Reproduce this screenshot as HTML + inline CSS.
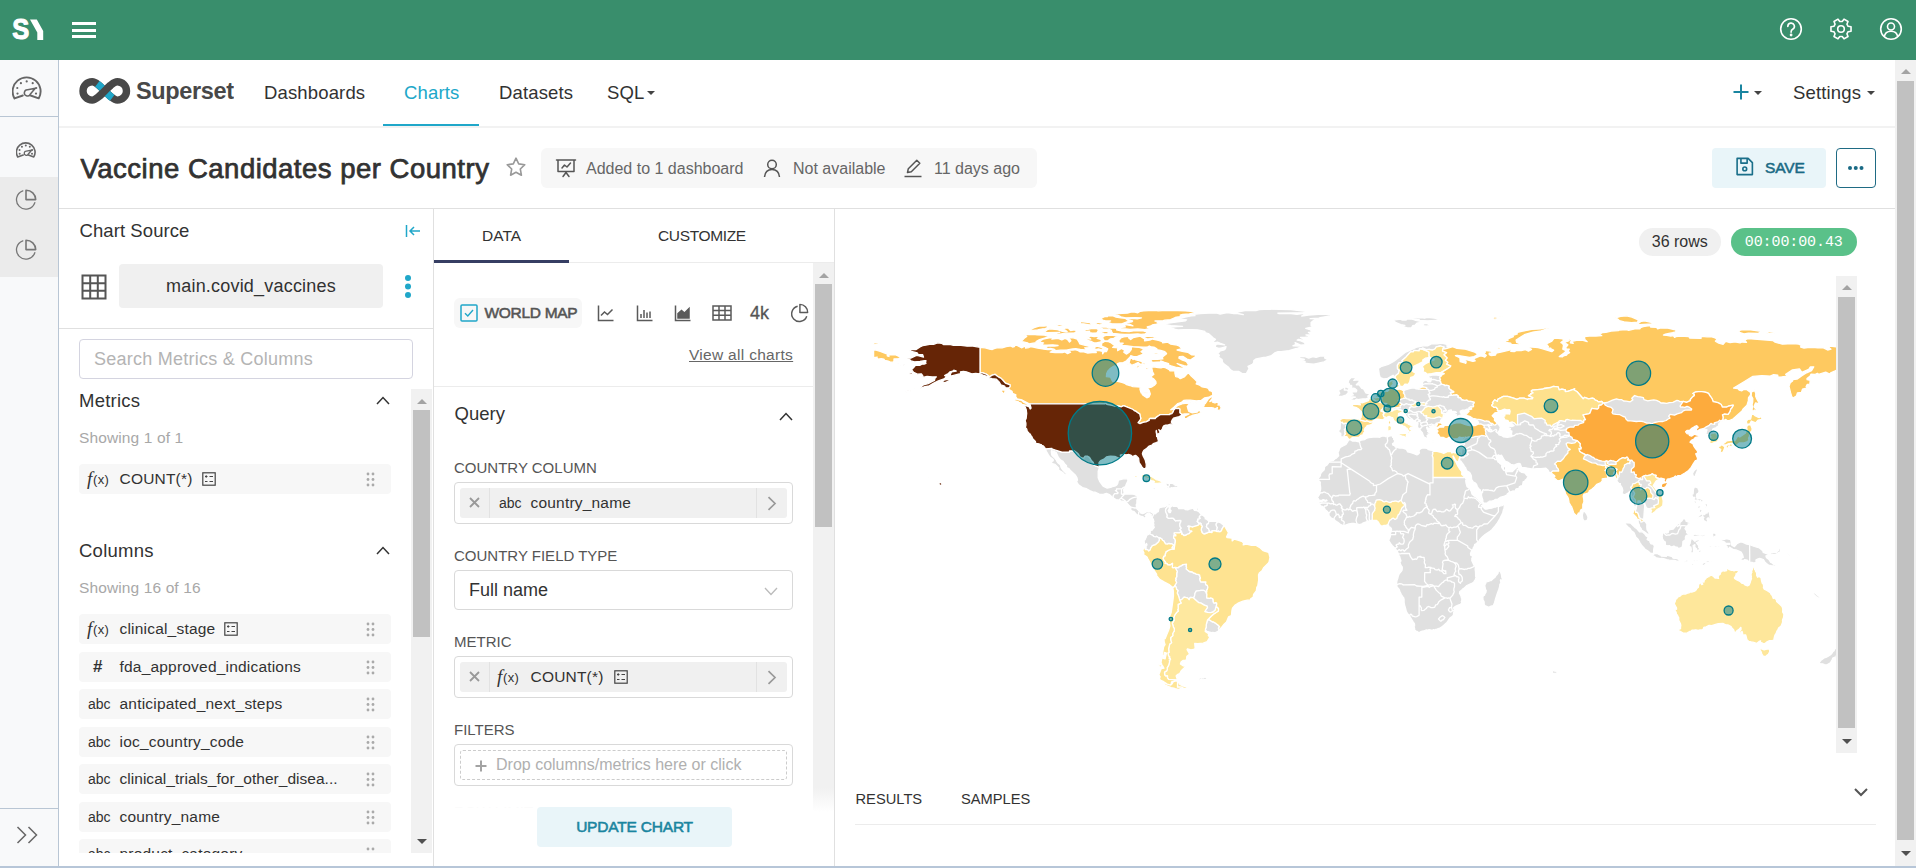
<!DOCTYPE html>
<html lang="en">
<head>
<meta charset="utf-8">
<title>Vaccine Candidates per Country</title>
<style>
*{box-sizing:border-box;margin:0;padding:0}
html,body{width:1916px;height:868px;overflow:hidden;background:#fff}
body{position:relative;font-family:"Liberation Sans",sans-serif;color:#323232;font-size:15px}
.abs{position:absolute}
.t{position:absolute;white-space:nowrap;line-height:1}
#topbar{left:0;top:0;width:1916px;height:60px;background:#398e6c}
#side{left:0;top:60px;width:59px;height:808px;background:#f8f9fa;border-right:1px solid #b9c6d4}
#side .sel{left:0;top:116.500px;width:58px;height:100.500px;background:#ebebeb}
#side .l1{left:0;top:56px;width:58px;height:1px;background:#b9c6d4}
#side .l2{left:0;top:748px;width:58px;height:1px;background:#b9c6d4}
#bottomline{left:0;top:866px;width:1916px;height:2px;background:#b7c6d8}
#navline{left:59px;top:126px;width:1836px;height:2px;background:#f2f2f2}
#titleline{left:59px;top:208px;width:1836px;height:1px;background:#e0e0e0}
.nav{font-size:18.5px;top:84px;color:#323232;letter-spacing:.15px}
#pgscroll{left:1895px;top:60px;width:21px;height:806px;background:#f1f1f1}
.thumb{position:absolute;background:#c1c1c1}
.arr-up{position:absolute;width:0;height:0;border-left:5px solid transparent;border-right:5px solid transparent;border-bottom:5px solid #505050}
.arr-dn{position:absolute;width:0;height:0;border-left:5px solid transparent;border-right:5px solid transparent;border-top:5px solid #505050}
.arr-up.lt{border-bottom-color:#a3a3a3}
#meta{left:541px;top:148px;width:496px;height:40px;background:#f7f7f7;border-radius:6px}
.mt{font-size:16px;color:#666;top:161px}
#save{left:1712px;top:148px;width:114px;height:40px;background:#e9f5f9;border-radius:4px}
#more{left:1836px;top:148px;width:40px;height:40px;border:1.5px solid #1f6b84;border-radius:4px;background:#fff}
.vline{position:absolute;width:1px;background:#e0e0e0}
.hline{position:absolute;height:1px;background:#e0e0e0}
.h18{font-size:18.5px;color:#323232;letter-spacing:.25px}
.item{position:absolute;left:79px;width:312px;height:30px;background:#f7f7f7;border-radius:4px}
.item .nm{position:absolute;left:40.5px;top:7px;font-size:15.5px;letter-spacing:.2px;line-height:1;color:#323232;white-space:nowrap}
.item .ty{position:absolute;left:9px;top:7.5px;font-size:14px;line-height:1;color:#323232;white-space:nowrap}
.item .fx{position:absolute;left:8px;top:4.5px;font-size:13px;line-height:1;color:#323232;white-space:nowrap}
.fx i{font-family:"Liberation Serif",serif;font-style:italic;font-size:19px}
.fx span{font-size:13px;position:relative;top:-1px;margin-left:.8px;letter-spacing:.3px}
.dots{position:absolute;left:287px;top:8px;width:9px;height:15px}
.dim{font-size:15.5px;color:#a8a8a8;letter-spacing:.12px}
.lbl{font-size:15px;color:#555;letter-spacing:0}
.box{position:absolute;left:454px;width:339px;height:41.500px;border:1px solid #d9d9d9;border-radius:4px;background:#fff}
.pill{position:absolute;left:5px;top:5px;width:327px;height:30px;background:#f0f0f0;border-radius:3px}
.pill .x{position:absolute;left:0;top:0;width:30px;height:30px;border-right:1px solid #e2e2e2}
.pill .r{position:absolute;right:0;top:0;width:31px;height:30px;border-left:1px solid #e2e2e2}
.pill .ty{position:absolute;left:39px;top:7.5px;font-size:14px;line-height:1;white-space:nowrap}
.pill .fx{position:absolute;left:37px;top:4.5px;font-size:13px;line-height:1;white-space:nowrap}
.pill .nm{position:absolute;left:70.5px;top:7px;font-size:15.5px;letter-spacing:.2px;line-height:1;white-space:nowrap}
</style>
</head>
<body>
<!-- TOP BAR -->
<div id="topbar" class="abs">
  <svg class="abs" style="left:10px;top:14px" width="40" height="30" viewBox="0 0 40 30"><text x="2.2" y="25.1" font-family="Liberation Sans, sans-serif" font-weight="700" font-size="30" fill="#fff" stroke="#fff" stroke-width="1.1" textLength="17" lengthAdjust="spacingAndGlyphs">S</text><polygon points="20,5.4 26.8,5.4 33.2,16.9 33.2,26 27.3,26 27.3,18.4" fill="#fff"/></svg>
  <div class="abs" style="left:72px;top:22px;width:23.5px;height:3px;background:#fff"></div>
  <div class="abs" style="left:72px;top:28.5px;width:23.5px;height:3px;background:#fff"></div>
  <div class="abs" style="left:72px;top:35px;width:23.5px;height:3px;background:#fff"></div>
  <svg class="abs" style="left:1778px;top:16px" width="26" height="26" viewBox="0 0 26 26" fill="none" stroke="#fff" stroke-width="1.6"><circle cx="13" cy="13" r="10.3"/><path d="M9.8 10.4a3.3 3.3 0 1 1 4.9 2.9c-1 .6-1.6 1.2-1.6 2.4v.6" stroke-linecap="round"/><circle cx="13.1" cy="19" r=".6" fill="#fff"/></svg>
  <svg class="abs" style="left:1828px;top:16.1px" width="26" height="26" viewBox="0 0 26 26" fill="none" stroke="#fff" stroke-width="1.6" stroke-linejoin="round"><circle cx="13" cy="13" r="3.3"/><path d="M20.10 10.28L23.04 10.68L23.04 15.32L20.10 15.72L18.91 17.78L20.02 20.53L16.01 22.85L14.19 20.51L11.81 20.51L9.99 22.85L5.98 20.53L7.09 17.78L5.90 15.72L2.96 15.32L2.96 10.68L5.90 10.28L7.09 8.22L5.98 5.47L9.99 3.15L11.81 5.49L14.19 5.49L16.01 3.15L20.02 5.47L18.91 8.22Z"/></svg>
  <svg class="abs" style="left:1878px;top:16px" width="26" height="26" viewBox="0 0 26 26" fill="none" stroke="#fff" stroke-width="1.6"><circle cx="13" cy="13" r="10.3"/><circle cx="13" cy="10.5" r="3.5"/><path d="M6.2 21c.6-4 3.3-5.8 6.8-5.8s6.2 1.800 6.800 5.800"/></svg>
</div>

<!-- LEFT SIDEBAR -->
<div id="side" class="abs">
  <div class="abs sel"></div>
  <div class="abs l1"></div>
  <div class="abs l2"></div>
  <svg class="abs" style="left:12px;top:16px" width="30" height="24" viewBox="0 0 30 24" fill="none" stroke="#666" stroke-width="1.900" stroke-linecap="round" stroke-linejoin="round"><path d="M2.500 22.400A14 14 0 1 1 26.700 22.400L18.600 19.500M2.500 22.400L10.800 19.500"/><path d="M23.300 12.300L15.700 13.800A3.100 3.100 0 1 0 18.200 18.300Z" stroke-width="1.500"/><g fill="#666" stroke="none"><circle cx="5.500" cy="17.600" r="1.100"/><circle cx="5.300" cy="12" r="1.100"/><circle cx="8.900" cy="7.200" r="1.100"/><circle cx="14.700" cy="5.400" r="1.100"/><circle cx="20.700" cy="7.200" r="1.100"/><circle cx="24.200" cy="12" r="1.100"/><circle cx="24" cy="17.600" r="1.100"/></g></svg>
  <svg class="abs" style="left:16px;top:82px" width="20" height="16" viewBox="0 0 30 24" fill="none" stroke="#666" stroke-width="2.400" stroke-linecap="round" stroke-linejoin="round"><path d="M2.500 22.400A14 14 0 1 1 26.700 22.400L18.600 19.500M2.500 22.400L10.800 19.500"/><path d="M23.300 12.300L15.700 13.800A3.100 3.100 0 1 0 18.200 18.300Z" stroke-width="2"/><g fill="#666" stroke="none"><circle cx="5.500" cy="17.600" r="1.500"/><circle cx="5.300" cy="12" r="1.500"/><circle cx="8.900" cy="7.200" r="1.500"/><circle cx="14.700" cy="5.400" r="1.500"/><circle cx="20.700" cy="7.200" r="1.500"/><circle cx="24.200" cy="12" r="1.500"/><circle cx="24" cy="17.600" r="1.500"/></g></svg>
  <svg class="abs" style="left:15px;top:129.300px" width="22" height="22" viewBox="0 0 22 22" fill="none" stroke="#777" stroke-linejoin="round" stroke-linecap="round"><path d="M7.800 1.800A9.400 9.400 0 1 0 19.800 13.700" stroke-width="1.300"/><path d="M11 1.200V10.600H20.700A9.600 9.600 0 0 0 11 1.200Z" stroke-width="1.600"/></svg>
  <svg class="abs" style="left:15px;top:179.300px" width="22" height="22" viewBox="0 0 22 22" fill="none" stroke="#777" stroke-linejoin="round" stroke-linecap="round"><path d="M7.800 1.800A9.400 9.400 0 1 0 19.800 13.700" stroke-width="1.300"/><path d="M11 1.200V10.600H20.700A9.600 9.600 0 0 0 11 1.200Z" stroke-width="1.600"/></svg>
  <svg class="abs" style="left:16px;top:765px" width="22" height="20" viewBox="0 0 22 20" fill="none" stroke="#666" stroke-width="1.500"><path d="M1.500 2L9.500 10L1.500 18M12.500 2L20.500 10L12.500 18"/></svg>
</div>
<div id="bottomline" class="abs"></div>

<!-- NAV -->
<svg class="abs" style="left:79px;top:77.9px" width="51.5" height="25.8" viewBox="0 0 51.5 25.8" fill="none" stroke-width="7.4"><path d="M13.2 3.7C20.5 3.7 31 22.1 38.3 22.1A9.2 9.2 0 0 0 47.5 12.9A9.2 9.2 0 0 0 38.3 3.7C31 3.7 20.5 22.1 13.2 22.1A9.2 9.2 0 0 1 4 12.9A9.2 9.2 0 0 1 13.2 3.7Z" stroke="#484848"/><path d="M13.2 3.7C20.5 3.7 31 22.1 38.3 22.1" stroke="#20a7c9" pathLength="100" stroke-dasharray="64 100" stroke-dashoffset="-18"/><path d="M13.2 22.1C20.5 22.1 31 3.7 38.3 3.7" stroke="#484848" pathLength="100" stroke-dasharray="50 100" stroke-dashoffset="-25"/></svg>
<div class="t" style="left:136px;top:79px;font-size:24.5px;font-weight:700;color:#484848;letter-spacing:-.4px;transform-origin:0 0;transform:scaleX(.96)">Superset</div>
<div class="t nav" style="left:264px">Dashboards</div>
<div class="t nav" style="left:404px;color:#20a7c9">Charts</div>
<div class="abs" style="left:383px;top:124px;width:96px;height:3px;background:#20a7c9"></div>
<div class="t nav" style="left:499px">Datasets</div>
<div class="t nav" style="left:607px">SQL</div>
<div class="arr-dn" style="left:647px;top:91px;border-width:4.5px 4px 0 4px;border-top-color:#444"></div>
<svg class="abs" style="left:1732px;top:83px" width="18" height="18" viewBox="0 0 18 18" stroke="#1a85a0" stroke-width="2" fill="none"><path d="M9 1.500v15M1.500 9h15"/></svg>
<div class="arr-dn" style="left:1754px;top:91px;border-width:4.5px 4px 0 4px;border-top-color:#444"></div>
<div class="t nav" style="left:1793px">Settings</div>
<div class="arr-dn" style="left:1867px;top:91px;border-width:4.5px 4px 0 4px;border-top-color:#444"></div>
<div id="navline" class="abs"></div>

<!-- TITLE ROW -->
<div class="t" style="left:80.5px;top:154.6px;font-size:27.5px;font-weight:400;-webkit-text-stroke:.75px #323232;color:#323232;letter-spacing:.5px">Vaccine Candidates per Country</div>
<svg class="abs" style="left:505px;top:156px" width="22" height="22" viewBox="0 0 22 22" fill="none" stroke="#999" stroke-width="1.600" stroke-linejoin="round"><path d="M11 2.200l2.700 5.700 6.100.8-4.500 4.300 1.100 6.200L11 16.200 5.600 19.200l1.100-6.200L2.200 8.700l6.100-.8z"/></svg>
<div id="meta" class="abs"></div>
<svg class="abs" style="left:555px;top:158px" width="22" height="21" viewBox="0 0 22 21" fill="none" stroke="#555" stroke-width="1.500" stroke-linejoin="round" stroke-linecap="round"><path d="M1.500 2h19M3 2v11.500h16V2M8 18.500l3-4 3 4M7 10l2.500-3 2.500 2 3.500-4"/></svg>
<div class="t mt" style="left:586px">Added to 1 dashboard</div>
<svg class="abs" style="left:762px;top:158px" width="20" height="20" viewBox="0 0 20 20" fill="none" stroke="#555" stroke-width="1.500"><circle cx="10" cy="6.500" r="4.300"/><path d="M2.500 19c.5-5 3.500-7.500 7.500-7.500s7 2.500 7.500 7.500"/></svg>
<div class="t mt" style="left:793px">Not available</div>
<svg class="abs" style="left:903px;top:158px" width="20" height="20" viewBox="0 0 20 20" fill="none" stroke="#555" stroke-width="1.500" stroke-linejoin="round"><path d="M1.500 18.500h17" /><path d="M4.500 14.500l.8-3.800L13.800 2.200l3 3L8.300 13.700Z"/></svg>
<div class="t mt" style="left:934px">11 days ago</div>
<div id="save" class="abs"></div>
<svg class="abs" style="left:1734.5px;top:156.3px" width="19.5" height="21" viewBox="0 0 20 22" fill="none" stroke="#1a6f8a" stroke-width="1.700" stroke-linejoin="round"><path d="M2 2.500h11.500L18 7v12.500H2Z"/><path d="M6 2.500v5h6.500v-5"/><circle cx="10" cy="13.500" r="2"/></svg>
<div class="t" style="left:1765px;top:160px;font-size:15.5px;font-weight:400;-webkit-text-stroke:.55px #1a6a85;letter-spacing:-.15px;color:#1a6a85">SAVE</div>
<div id="more" class="abs"><div class="abs" style="left:11px;top:17px;width:3.5px;height:3.5px;border-radius:2px;background:#1a6a85;box-shadow:5.75px 0 0 #1a6a85,11.5px 0 0 #1a6a85"></div></div>
<div id="titleline" class="abs"></div>

<!-- PAGE SCROLLBAR -->
<div id="pgscroll" class="abs">
  <div class="arr-up lt" style="left:5.500px;top:9px"></div>
  <div class="thumb" style="left:2px;top:21px;width:17px;height:759px"></div>
  <div class="arr-dn" style="left:5.500px;top:791px"></div>
</div>

<!-- SECTIONS INSERTED BELOW -->
<!-- LEFT PANEL -->
<div class="vline" style="left:433px;top:209px;height:657px"></div>
<div class="t h18" style="left:79.5px;top:222px;letter-spacing:.08px">Chart Source</div>
<svg class="abs" style="left:405px;top:223.5px" width="16" height="14" viewBox="0 0 16 14" fill="none" stroke="#20a7c9" stroke-width="1.500"><path d="M1.500 1v12M15 7H5M9 3L5 7l4 4"/></svg>
<svg class="abs" style="left:81px;top:274px" width="26" height="26" viewBox="0 0 26 26" fill="none" stroke="#555" stroke-width="2"><rect x="1.500" y="1.500" width="23" height="23"/><path d="M1.500 9.200h23M1.500 16.800h23M9.200 1.500v23M16.800 1.500v23"/></svg>
<div class="abs" style="left:119px;top:264px;width:264px;height:44px;background:#f0f0f0;border-radius:4px"></div>
<div class="t" style="left:119px;width:264px;text-align:center;top:277px;font-size:18px;letter-spacing:.2px;color:#323232">main.covid_vaccines</div>
<div class="abs" style="left:405.2px;top:275px;width:5.5px;height:5.5px;border-radius:3px;background:#20a7c9;box-shadow:0 8.5px 0 #20a7c9,0 17px 0 #20a7c9"></div>
<div class="hline" style="left:59px;top:328px;width:374px"></div>
<div class="abs" style="left:79px;top:339px;width:334px;height:40px;border:1px solid #d4d4e0;border-radius:4px"></div>
<div class="t" style="left:94px;top:350px;font-size:18px;letter-spacing:.25px;color:#b4b4b4">Search Metrics &amp; Columns</div>
<div class="t h18" style="left:79px;top:392px">Metrics</div>
<svg class="abs" style="left:376px;top:396px" width="14" height="9" viewBox="0 0 14 9" fill="none" stroke="#323232" stroke-width="1.500"><path d="M1 8l6-6.500L13 8"/></svg>
<div class="t dim" style="left:79px;top:430px">Showing 1 of 1</div>
<div class="item" style="top:464px"><div class="fx"><i>f</i><span>(x)</span></div><div class="nm">COUNT(*)</div><svg class="abs" style="left:123px;top:8px" width="14" height="14" viewBox="0 0 14 14" fill="none" stroke="#444" stroke-width="1.200"><rect x=".8" y=".8" width="12.400" height="12.400"/><path d="M3 4.500h2.500M7.500 4.500h3.500M3 9.500h2.500M7.500 9.500h3.500M4.200 3.200v2.600" stroke-width="1"/></svg><svg class="dots" viewBox="0 0 9 15" fill="#aaa"><circle cx="2" cy="2" r="1.400"/><circle cx="7" cy="2" r="1.400"/><circle cx="2" cy="7.500" r="1.400"/><circle cx="7" cy="7.500" r="1.400"/><circle cx="2" cy="13" r="1.400"/><circle cx="7" cy="13" r="1.400"/></svg></div>
<div class="t h18" style="left:79px;top:542px">Columns</div>
<svg class="abs" style="left:376px;top:546px" width="14" height="9" viewBox="0 0 14 9" fill="none" stroke="#323232" stroke-width="1.500"><path d="M1 8l6-6.500L13 8"/></svg>
<div class="t dim" style="left:79px;top:580px">Showing 16 of 16</div>
<div class="abs" style="left:59px;top:600px;width:354px;height:253px;overflow:hidden">
<div class="item" style="left:20px;top:14px"><div class="fx"><i>f</i><span>(x)</span></div><div class="nm">clinical_stage</div><svg class="abs" style="left:145px;top:8px" width="14" height="14" viewBox="0 0 14 14" fill="none" stroke="#444" stroke-width="1.200"><rect x=".8" y=".8" width="12.400" height="12.400"/><path d="M3 4.500h2.500M7.500 4.500h3.500M3 9.500h2.500M7.500 9.500h3.500M4.200 3.200v2.600" stroke-width="1"/></svg><svg class="dots" viewBox="0 0 9 15" fill="#aaa"><circle cx="2" cy="2" r="1.400"/><circle cx="7" cy="2" r="1.400"/><circle cx="2" cy="7.500" r="1.400"/><circle cx="7" cy="7.500" r="1.400"/><circle cx="2" cy="13" r="1.400"/><circle cx="7" cy="13" r="1.400"/></svg></div>
<div class="item" style="left:20px;top:52px"><div class="ty" style="left:14px;top:6px;font-weight:700;font-size:17px">#</div><div class="nm">fda_approved_indications</div><svg class="dots" viewBox="0 0 9 15" fill="#aaa"><circle cx="2" cy="2" r="1.400"/><circle cx="7" cy="2" r="1.400"/><circle cx="2" cy="7.500" r="1.400"/><circle cx="7" cy="7.500" r="1.400"/><circle cx="2" cy="13" r="1.400"/><circle cx="7" cy="13" r="1.400"/></svg></div>
<div class="item" style="left:20px;top:89px"><div class="ty">abc</div><div class="nm">anticipated_next_steps</div><svg class="dots" viewBox="0 0 9 15" fill="#aaa"><circle cx="2" cy="2" r="1.400"/><circle cx="7" cy="2" r="1.400"/><circle cx="2" cy="7.500" r="1.400"/><circle cx="7" cy="7.500" r="1.400"/><circle cx="2" cy="13" r="1.400"/><circle cx="7" cy="13" r="1.400"/></svg></div>
<div class="item" style="left:20px;top:127px"><div class="ty">abc</div><div class="nm">ioc_country_code</div><svg class="dots" viewBox="0 0 9 15" fill="#aaa"><circle cx="2" cy="2" r="1.400"/><circle cx="7" cy="2" r="1.400"/><circle cx="2" cy="7.500" r="1.400"/><circle cx="7" cy="7.500" r="1.400"/><circle cx="2" cy="13" r="1.400"/><circle cx="7" cy="13" r="1.400"/></svg></div>
<div class="item" style="left:20px;top:164px"><div class="ty">abc</div><div class="nm" style="letter-spacing:.03px">clinical_trials_for_other_disea...</div><svg class="dots" viewBox="0 0 9 15" fill="#aaa"><circle cx="2" cy="2" r="1.400"/><circle cx="7" cy="2" r="1.400"/><circle cx="2" cy="7.500" r="1.400"/><circle cx="7" cy="7.500" r="1.400"/><circle cx="2" cy="13" r="1.400"/><circle cx="7" cy="13" r="1.400"/></svg></div>
<div class="item" style="left:20px;top:202px"><div class="ty">abc</div><div class="nm">country_name</div><svg class="dots" viewBox="0 0 9 15" fill="#aaa"><circle cx="2" cy="2" r="1.400"/><circle cx="7" cy="2" r="1.400"/><circle cx="2" cy="7.500" r="1.400"/><circle cx="7" cy="7.500" r="1.400"/><circle cx="2" cy="13" r="1.400"/><circle cx="7" cy="13" r="1.400"/></svg></div>
<div class="item" style="left:20px;top:239px"><div class="ty">abc</div><div class="nm">product_category</div><svg class="dots" viewBox="0 0 9 15" fill="#aaa"><circle cx="2" cy="2" r="1.400"/><circle cx="7" cy="2" r="1.400"/><circle cx="2" cy="7.500" r="1.400"/><circle cx="7" cy="7.500" r="1.400"/><circle cx="2" cy="13" r="1.400"/><circle cx="7" cy="13" r="1.400"/></svg></div>
</div>
<div class="abs" style="left:411px;top:389px;width:21px;height:463.5px;background:#f1f1f1">
  <div class="arr-up lt" style="left:5.5px;top:9.5px"></div>
  <div class="thumb" style="left:2px;top:21.2px;width:17px;height:226.6px"></div>
  <div class="arr-dn" style="left:5.5px;top:450px"></div>
</div>
<!--LEFTPANEL-END-->
<!-- MID PANEL -->
<div class="vline" style="left:834px;top:209px;height:657px"></div>
<div class="hline" style="left:434px;top:262px;width:400px;background:#ececec"></div>
<div class="t" style="left:482px;top:228px;font-size:15.500px;color:#323232">DATA</div>
<div class="t" style="left:658px;top:228px;font-size:15.500px;letter-spacing:-.35px;color:#323232">CUSTOMIZE</div>
<div class="abs" style="left:434px;top:260px;width:135px;height:3px;background:#363e63"></div>
<div class="abs" style="left:434px;top:263px;width:381px;height:545px;overflow:hidden">
 <div class="t" style="left:20px;top:541px;font-size:15px;color:#555">ROW LIMIT</div>
 <div class="abs" style="left:0;top:525px;width:381px;height:20px;background:linear-gradient(rgba(255,255,255,0),#fff)"></div>
</div>
<div class="abs" style="left:454px;top:298px;width:128px;height:29.600px;background:#f7f7f7;border-radius:6px"></div>
<svg class="abs" style="left:460px;top:304px" width="18" height="18" viewBox="0 0 18 18" fill="none" stroke="#20a7c9" stroke-width="1.500"><rect x="1" y="1" width="16" height="16" rx="1"/><path d="M5 9.200l2.800 2.800L13 6" stroke-width="1.400"/></svg>
<div class="t" style="left:484.5px;top:305px;font-size:15.5px;font-weight:400;-webkit-text-stroke:.55px #555;color:#555;letter-spacing:-.3px">WORLD MAP</div>
<svg class="abs" style="left:597px;top:304px" width="18" height="18" viewBox="0 0 18 18" fill="none" stroke="#5a5a5a" stroke-width="1.500"><path d="M1.500 1.500v15h15M4 11.500l3.500-3.500 3 2.500 5-5"/></svg>
<svg class="abs" style="left:636px;top:304px" width="18" height="18" viewBox="0 0 18 18" fill="none" stroke="#5a5a5a" stroke-width="1.500"><path d="M1.500 1.500v15h15M5 14v-4M8 14V6M11 14v-5.500M14 14V7.500"/></svg>
<svg class="abs" style="left:674px;top:304px" width="18" height="18" viewBox="0 0 18 18" fill="none" stroke="#5a5a5a" stroke-width="1.500"><path d="M1.500 1.500v15h15"/><path d="M4 14V9.500l3.500-3 3 2.500 4.500-4.500V14Z" fill="#5a5a5a"/></svg>
<svg class="abs" style="left:712px;top:304px" width="20" height="18" viewBox="0 0 20 18" fill="none" stroke="#5a5a5a" stroke-width="1.500"><rect x="1" y="2" width="18" height="14"/><path d="M1 6.500h18M1 11.200h18M7 2v14M13 2v14"/></svg>
<div class="t" style="left:750px;top:304px;font-size:18px;color:#555;-webkit-text-stroke:.3px #555">4k</div>
<svg class="abs" style="left:789px;top:303px" width="20" height="20" viewBox="0 0 22 22" fill="none" stroke="#5a5a5a" stroke-width="1.600" stroke-linejoin="round"><path d="M9.500 3.500A8.500 8.500 0 1 0 19.500 14.500"/><path d="M12 1.500V10.500H20.500A8.800 8.800 0 0 0 12 1.500Z"/></svg>
<div class="t" style="left:689px;top:347px;font-size:15.500px;letter-spacing:.3px;color:#666;text-decoration:underline">View all charts</div>
<div class="hline" style="left:434px;top:386px;width:381px;background:#ececec"></div>
<div class="t h18" style="left:454.5px;top:404.5px;letter-spacing:0">Query</div>
<svg class="abs" style="left:778.5px;top:412px" width="14" height="9" viewBox="0 0 14 9" fill="none" stroke="#323232" stroke-width="1.500"><path d="M1 8l6-6.500L13 8"/></svg>
<div class="t lbl" style="left:454px;top:460px">COUNTRY COLUMN</div>
<div class="box" style="top:482px"><div class="pill"><div class="x"><svg class="abs" style="left:9px;top:9px" width="11" height="11" viewBox="0 0 11 11" stroke="#999" stroke-width="1.800"><path d="M1 1l9 9M10 1l-9 9"/></svg></div><div class="ty">abc</div><div class="nm">country_name</div><div class="r"><svg class="abs" style="left:10px;top:7.5px" width="10" height="15" viewBox="0 0 10 15" fill="none" stroke="#999" stroke-width="1.700"><path d="M1.500 1.200l6.500 6.300-6.500 6.300"/></svg></div></div></div>
<div class="t lbl" style="left:454px;top:548px">COUNTRY FIELD TYPE</div>
<div class="box" style="top:570px;height:40px"></div>
<div class="t" style="left:469px;top:581px;font-size:18px;color:#323232">Full name</div>
<svg class="abs" style="left:764px;top:587px" width="14" height="9" viewBox="0 0 14 9" fill="none" stroke="#bbb" stroke-width="1.300"><path d="M1 1l6 6.500L13 1"/></svg>
<div class="t lbl" style="left:454px;top:634px">METRIC</div>
<div class="box" style="top:656px"><div class="pill"><div class="x"><svg class="abs" style="left:9px;top:9px" width="11" height="11" viewBox="0 0 11 11" stroke="#999" stroke-width="1.800"><path d="M1 1l9 9M10 1l-9 9"/></svg></div><div class="fx"><i>f</i><span>(x)</span></div><div class="nm">COUNT(*)</div><svg class="abs" style="left:154px;top:8px" width="14" height="14" viewBox="0 0 14 14" fill="none" stroke="#444" stroke-width="1.200"><rect x=".8" y=".8" width="12.400" height="12.400"/><path d="M3 4.500h2.500M7.500 4.500h3.500M3 9.500h2.500M7.500 9.500h3.500M4.200 3.200v2.600" stroke-width="1"/></svg><div class="r"><svg class="abs" style="left:10px;top:7.5px" width="10" height="15" viewBox="0 0 10 15" fill="none" stroke="#999" stroke-width="1.700"><path d="M1.500 1.200l6.500 6.300-6.500 6.300"/></svg></div></div></div>
<div class="t lbl" style="left:454px;top:722px">FILTERS</div>
<div class="box" style="top:744px;height:42px"><div class="abs" style="left:5px;top:5px;width:327px;height:30px;border:1px dashed #ccc;border-radius:3px"></div><svg class="abs" style="left:19.5px;top:14.5px" width="12" height="12" viewBox="0 0 12 12" stroke="#a3a3a3" stroke-width="2"><path d="M6 .5v11M.5 6h11"/></svg><div class="t" style="left:41px;top:12px;font-size:16px;color:#b0b0b0">Drop columns/metrics here or click</div></div>
<div class="abs" style="left:537px;top:807px;width:195px;height:40px;background:#e9f5f9;border-radius:4px"></div>
<div class="t" style="left:537px;width:195px;text-align:center;top:818.5px;font-size:15.5px;font-weight:400;-webkit-text-stroke:.55px #1a85a0;letter-spacing:-.2px;color:#1a85a0">UPDATE CHART</div>
<div class="abs" style="left:813px;top:263px;width:21px;height:549px;background:linear-gradient(#f1f1f1 0,#f1f1f1 525px,#fff 549px)">
  <div class="arr-up lt" style="left:5.5px;top:9.5px"></div>
  <div class="thumb" style="left:2.2px;top:21.2px;width:16.6px;height:243.3px"></div>
</div>
<!--MIDPANEL-END-->
<!-- CHART PANEL -->
<div class="abs" style="left:1638.5px;top:228px;width:82.5px;height:27.5px;background:#f0f0f0;border-radius:14px"></div>
<div class="t" style="left:1638.5px;width:82.5px;text-align:center;top:233.5px;font-size:16px;color:#323232">36 rows</div>
<div class="abs" style="left:1731px;top:228px;width:125.5px;height:27.5px;background:#5ac189;border-radius:14px"></div>
<div class="t" style="left:1731px;width:125.5px;text-align:center;top:234.5px;font-size:15px;color:#fff;font-family:'Liberation Mono',monospace;letter-spacing:-.1px">00:00:00.43</div>
<!--MAPSTART--><svg class="abs" style="left:855px;top:279px" width="981" height="473" viewBox="855 279 981 473">
<g stroke="#fff" stroke-width="1.3" stroke-linejoin="round">
<path fill="#e0e0e0" d="M1237.2,312L1246.4,310.4L1255.9,310.5L1259.4,309.5L1269.1,309.2L1290.9,309.6L1307.9,311.7L1302.9,312.8L1292.4,312.9L1277.8,313.2L1279.1,313.7L1288.8,313.4L1297,314.3L1302.3,313.5L1304.6,314.5L1301.6,316L1308.5,315L1321.8,314L1330,314.5L1331.5,315.7L1320.4,317.6L1318.8,318.2L1310.1,318.7L1316.4,318.8L1313.2,320.8L1311.1,322.6L1311.1,325.6L1314.4,327.4L1310.1,327.5L1305.7,328.4L1310.7,329.8L1311.3,332.1L1308.4,332.4L1312,334.7L1305.9,335L1309.1,336L1308.2,337L1304.3,337.4L1300.5,337.4L1303.9,339.3L1304,340.5L1298.6,339.4L1297.2,340.1L1300.9,340.8L1304.4,342.5L1305.5,344.7L1300.6,345.2L1298.5,344.1L1295.1,342.6L1296,344.4L1292.9,345.8L1300.1,346L1303.8,346.1L1296.5,348.5L1289.1,350.6L1281.1,351.6L1278.1,351.6L1275.3,352.6L1271.5,355.5L1265.6,357.4L1263.7,357.5L1260.1,358.2L1256.2,358.9L1253.8,360.6L1253.8,362.5L1252.4,364.3L1248,366.4L1249.1,368.6L1247.8,370.8L1246.4,373.5L1242.6,373.7L1238.6,371.4L1233.1,371.4L1230.5,369.9L1228.6,367.3L1223.9,363.9L1222.5,362.1L1222.1,359.6L1218.4,357.1L1219.4,355.1L1217.5,354.1L1220.2,350.9L1224.3,349.9L1225.4,348.8L1226,346.7L1222.9,347.6L1221.4,348L1218.9,348.4L1215.6,347.5L1215.4,345.7L1216.5,344.2L1219,344.2L1224.6,344.9L1219.9,343.2L1217.5,342.2L1214.7,342.6L1212.5,342L1215.5,339.4L1213.8,338.4L1211.7,336.5L1208.4,333.6L1204.9,332.6L1204.9,331.4L1197.6,329.8L1191.8,329.6L1184.5,329.7L1177.9,329.9L1174.7,329.1L1170,327.3L1177.1,326.5L1182.6,326.3L1171,325.6L1164.8,324.5L1165.2,323.5L1175.5,322.2L1185.5,320.8L1186.6,319.8L1179.2,318.9L1181.6,317.8L1191,315.9L1195,315.6L1193.8,314.3L1200.3,313.6L1208.7,313.2L1217.1,313.2L1220.1,314L1227.3,312.5L1233.8,313.6L1237.6,313.7L1243.3,314.6L1236.8,313.2L1237.2,312ZM1325.2,356.1L1324.6,357.9L1327.7,359.8L1324.1,361.9L1316.3,363.7L1313.9,364.2L1310.3,363.8L1302.7,363L1305.4,361.8L1299.4,360.4L1304.3,359.9L1304.2,359.1L1298.4,358.5L1300.3,356.7L1304.4,356.3L1308.7,358.1L1312.8,356.6L1316.2,357.4L1320.7,355.9L1325.2,356.1Z"/>
<path fill="#e0e0e0" d="M1099.8,466.8L1098.7,467L1096.8,466.3L1094.6,465.5L1093.8,464.4L1093.3,462.5L1091.6,460.8L1089.5,457.3L1087.3,456.2L1085.1,456.2L1083.5,458.4L1081.3,457.5L1079.6,456.7L1079.1,455.4L1078.3,454L1076.6,452.6L1074.2,450.9L1069.5,450.9L1069.5,452.1L1061.9,452.1L1055.6,450.2L1051.5,448.8L1051.8,448.3L1045.3,448.8L1046.3,451.3L1048.5,455.1L1049.6,456.7L1053.2,459.5L1053.2,460.8L1050.8,461.9L1052.3,463.5L1055.1,464.4L1058.6,467.9L1058.6,470.1L1061.9,472L1063.8,473.6L1064.9,475.3L1066.3,474.2L1066.3,473.6L1064.9,472L1064.1,471.2L1062.7,469.8L1061.1,467.4L1060.3,464.6L1058.4,463.3L1057,461.6L1056.4,460L1054.8,458.1L1052.9,456.3L1051.8,455.1L1051.3,451.8L1051.5,450.7L1056.2,452.4L1058.4,457.5L1060.3,459.7L1063,461.4L1065.2,464.6L1066.5,465.5L1066.5,467.6L1069,468.7L1070.4,470.6L1075.5,475.3L1076.9,477.7L1077.5,479.9L1076.6,481.8L1078.5,484.8L1082.4,487.6L1086.5,488.7L1089.7,490.6L1092.7,491.9L1094.9,492.2L1099.3,494.1L1102.6,494.5L1106.4,493.3L1109.9,494.9L1113.2,497.9L1115.9,499.6L1118.9,500.1L1120.8,500.9L1123.3,501.5L1125.2,500.9L1126,502.3L1128.8,505.3L1130.9,507.2L1130.7,509.9L1132.6,511.3L1133.9,511.3L1136.7,514.6L1138.3,515.1L1138.6,515.4L1141.9,516.5L1143.2,516.8L1144,517.9L1145.4,517.6L1146.5,517L1145.1,515.4L1147.6,513.2L1149.2,513.2L1151.4,514.8L1150.9,515.5L1152.2,517.9L1153.6,516.8L1153.7,513.8L1150.6,511.8L1147.6,511.3L1144,513.2L1142.7,513.5L1140.5,512.9L1140.5,512.4L1137.2,509.1L1136.4,507.8L1136.5,505.8L1136.1,505L1136.9,503.7L1136.9,500.4L1137.8,496.8L1137.2,495.8L1134.5,494.4L1130.1,493.8L1124.9,494.2L1123,494.7L1124.1,493L1123.6,489.5L1124.4,488.1L1124.4,487L1125.2,487.6L1125.8,485.6L1126.3,484.3L1127.9,480.7L1127.8,479.4L1127.1,478.8L1123.3,478.8L1118.4,480.2L1117.8,483.2L1117,484.8L1115.4,485.9L1111.6,487L1107.2,488.1L1103.1,486.2L1099.6,481.3L1098.2,477.7L1098.2,471.2L1099.8,466.8ZM1161.5,487.6L1164.5,487L1166.4,487.3L1167.5,486.5L1166.1,485.4L1166.1,484.3L1164.5,484L1165.1,483.2L1166.7,483.2L1169.2,483.7L1171.6,483.2L1173.8,484L1174.3,484.8L1176,484.8L1175.7,485.6L1177.1,485.6L1178.4,486.7L1177.3,487.8L1174.9,487.3L1172.4,487.8L1171.1,487.6L1170,489.5L1169.2,488.4L1167.2,487.8L1163.1,488.4L1161.5,487.6ZM1151.1,487.8L1152.5,487L1155,487.3L1156.9,488.7L1155,488.7L1154.1,489.2L1151.1,487.8ZM1181.4,488.4L1181.4,487L1185.8,487.3L1185.8,487.8L1185.3,488.4L1181.4,488.4ZM1152,468.7L1150.9,470.4L1151.4,471.5L1152.2,471.2L1153.3,471.2L1152.5,469.5L1152,468.7ZM1152.5,464.9L1149.5,465.5L1150.6,464.2L1152.4,464.1L1152.5,464.9ZM1154.7,464.9L1154.1,466.8L1153.7,466.5L1153.9,465.2L1154.7,464.9ZM1196.4,508L1198.6,507.9L1198.6,509.9L1196.2,510.2L1195.8,509.9L1196.5,509.2L1196.4,508Z"/>
<path fill="#fec45c" d="M980,347.3L985.2,347.8L989.6,349.2L992.3,349.5L994.8,348.4L998,347.6L1002.1,347.8L1006.2,346.7L1010.6,345.9L1012.5,347L1014.4,346.5L1015.2,345.1L1017.1,345.4L1021.5,347.8L1025.3,345.9L1025.6,348.1L1028.9,347.6L1030,346.7L1033.2,347L1037.6,348.1L1043.9,349.2L1047.7,349.7L1050.4,349.5L1054,350.8L1050.2,352.2L1055.1,352.7L1062.4,352.5L1064.9,351.9L1067.6,353.6L1070.6,352.2L1067.9,351.1L1069.5,350.2L1073.1,350L1075,349.7L1077.5,350.3L1080.2,351.9L1083.2,351.7L1087.8,353L1092.2,352.5L1096.3,352.5L1095.7,350.8L1098.2,350.3L1102.6,351.4L1102.6,353.8L1104.2,351.7L1106.4,351.7L1107.7,348.9L1104.7,347.3L1101.5,346.2L1101.7,343.2L1105,341.3L1108.6,341.6L1111.3,342.9L1115.1,345.9L1112.7,347.3L1117.8,347.8L1117.6,350.6L1121.4,348.4L1124.7,350.3L1123.8,352.2L1126.3,354.1L1129.3,352.2L1131.2,349.7L1131.5,346.7L1135.3,347L1139.4,347.3L1143,348.7L1143.2,350L1141,351.7L1143,353L1142.7,354.4L1137.5,356.3L1133.7,356.6L1130.7,355.7L1129.9,357.1L1127.4,359.6L1126.6,360.7L1123.3,362.6L1119.5,362.8L1117.3,363.9L1117,365.6L1114,366.1L1110.5,368.3L1107.7,371.3L1106.7,373.5L1106.4,376.6L1110.5,377L1111.6,379.6L1112.9,381.7L1116.8,381.1L1121.9,382.4L1124.7,383.3L1126.6,384.7L1129.9,385.5L1132.9,386.6L1137.2,386.9L1140.2,387L1140,389.3L1140.8,392L1142.7,395L1146.8,397.8L1149,397L1150.3,394L1149,389.9L1147,388.2L1151.4,387.1L1154.4,385.2L1156.1,383.3L1155.8,381.4L1153.9,379.1L1150.6,377L1153.9,374.2L1152.5,371.7L1151.7,367.5L1153.6,366.8L1158.2,367.5L1161,367.8L1163.4,367.2L1165.9,368L1169.2,369.7L1170,370.8L1174.9,370.9L1174.9,373.2L1175.7,376.6L1178.2,377L1180.3,378.7L1184.2,377L1186.9,374L1188.5,372.9L1190.7,375.4L1194.3,378.7L1197.3,381.9L1196.2,383.9L1199.7,385.2L1202.2,386.9L1206.5,387.7L1208.4,388.5L1209.5,390.7L1211.5,391.2L1212.5,392L1212.8,395.3L1210.9,396.1L1209,397.2L1204.4,398L1201.1,400.5L1196.4,400.8L1190.4,400.2L1186.3,400.2L1183.6,400.5L1181.4,402.4L1177.9,403.5L1173.9,407.3L1170.8,409.8L1173,409.2L1177.5,405.7L1183.2,403.5L1187.2,403.2L1189.6,404.6L1187.2,406.2L1188,409.2L1188.8,411.4L1192.3,412.8L1197,412.2L1199.7,409.2L1200,411.1L1201.6,412.2L1198.4,413.9L1192.2,415.5L1189.6,416.6L1186.3,418.8L1184.4,418.5L1184.2,416.1L1189.1,413.9L1184.7,413.9L1181.7,414.4L1179.8,412.8L1179.8,409L1178.7,408.3L1176.5,408.7L1176,408.1L1173.8,410.1L1173,412.2L1171.9,413.6L1170,414L1169.7,414.7L1160.4,414.7L1159.3,415.2L1156.1,417.4L1155.2,418.5L1150,418.5L1149.2,419.3L1149.2,420.4L1146,421.8L1143,422.3L1140,423.7L1138,422.6L1140,420.2L1140.8,418.5L1139.7,413.9L1136.9,412.2L1136.7,411.7L1134.2,410.6L1133.1,409.5L1123.6,405.7L1121.1,406.8L1120.3,406.5L1117,406L1114.8,406.2L1112.1,405.3L1109.4,404.9L1106.7,404.3L1106.1,403L1105.2,402.7L1105.2,403.8L1029.7,403.8L1029.2,403.8L1024,401L1022.1,400L1017.1,398.9L1015.5,396.4L1015.9,394.8L1012.5,393.4L1012,391.2L1008.7,389.3L1008.7,388L1010.1,386.6L1010.1,384.9L1005.4,383.2L1002.7,380L1000.8,378.1L998.3,376.8L996.7,375.7L995,374.3L992.3,375.1L989.6,376.8L987.4,374.9L985.5,373.8L982.8,372.9L980,372.9ZM1027.8,405.1L1026.4,405.4L1021.8,404.3L1021,403.2L1018.5,402.4L1018.2,401.6L1015.2,401L1014.4,399.7L1014.4,398.9L1017.4,399.4L1019.1,400L1021.5,400.2L1022.6,401.2L1024,402.4L1026.7,403.6L1027.8,405.1ZM1002.7,390.1L1005.4,389.9L1004.6,392.9L1006.8,395L1005.7,395L1004,394L1001.6,391.8L1001.3,389.6ZM1213.1,397.5L1211.7,399.1L1209.8,401.6L1211.7,400.6L1213.4,401.3L1212.5,402.1L1215,403L1216.1,402.1L1218.8,403.2L1218,405.1L1219.9,404.6L1220.2,406L1221.3,407.9L1219.9,410.2L1218.8,410.3L1216.9,409.8L1217.5,407.6L1213.6,409.5L1212,409.5L1213.9,408.1L1211.3,407.6L1208.4,407.6L1203,407.6L1202.7,406.8L1204.4,405.8L1203.3,405.1L1205.4,403.5L1208.2,399.1L1210.1,397.5L1212.3,396.7L1213.6,396.7ZM1188.8,401.3L1193.2,401.9L1196.2,403L1196.2,403.5L1194.8,403.5L1191.3,402.7L1188.8,401.3ZM1190.2,409.2L1191,410.5L1193.2,410.9L1195.6,410.9L1194.3,412L1193.2,412L1189.9,410.9L1189.1,410.1L1190.2,409.2ZM1132.3,358.3L1132.9,359.6L1134.2,359L1135.9,359.8L1138.9,360.7L1142.1,361.6L1142.3,362.9L1144.3,362.7L1146.2,363.7L1143.8,364.5L1139.7,363.8L1138,362.6L1135.3,363.9L1131.5,365.4L1130.4,363.9L1126.9,364.2L1129.2,362.7L1129.6,360.7L1130.4,358.2L1132.3,358.3ZM1120.8,338L1123.6,336.9L1130.7,336.1L1128.5,337.7L1130.7,339.6L1133.3,337.5L1140.2,336.2L1144.9,339.1L1144.5,340.8L1149.8,340.1L1152.5,339L1158.5,340.4L1162.3,341.6L1162.6,342.8L1167.8,342.2L1170.5,344L1177.1,345.1L1179.5,346.2L1182.1,348.7L1177.1,350L1183.5,351.7L1187.8,352.3L1191.8,354.9L1196,355L1195.2,356.9L1190.4,360.1L1187,359L1182.8,356.3L1179.2,356.7L1178.9,358.2L1181.7,359.8L1185.5,361.1L1186.6,361.8L1188.3,364.5L1187.4,366.5L1183.9,365.7L1177.1,363.5L1180.9,365.8L1183.9,367.5L1184.2,368.6L1176.8,367.5L1171.1,365.8L1167.8,364.5L1168.6,363.7L1164.5,362.3L1160.7,360.9L1160.7,361.8L1152.8,362.3L1150.3,361.2L1152.2,359.3L1157.4,359.3L1162.9,358.9L1162.1,357.9L1163.1,356.6L1166.6,353.8L1165.9,352.7L1164.8,351.7L1160.7,350.4L1155,349.5L1156.9,348.8L1153.9,347.1L1151.5,347L1149.3,346L1147.9,346.8L1143,347.2L1133.1,346.6L1127.2,345.8L1122.8,345.4L1120.6,344.4L1123.3,343.2L1119.5,343.2L1118.7,340.5L1120.8,338ZM1043.1,345L1041.7,343.7L1043.6,342.9L1039,342.2L1041.3,340.2L1043.2,339.1L1050.4,337.5L1053.2,338L1051.9,339.2L1058,338.4L1061.8,339.8L1064.9,338.4L1067.4,339.3L1069.5,342L1070.9,340.8L1069,338L1071.5,337.6L1074.2,338.1L1077.2,339.2L1078.9,341.8L1079.7,343.8L1084.3,345.1L1089.2,346.4L1088.9,347.6L1084.6,347.8L1086.2,348.9L1085.3,349.9L1080.3,349.5L1075.7,348.7L1072.5,348.9L1067.4,349.8L1060.5,350.2L1055.6,350.6L1054.1,349.2L1050.4,348.4L1048,348.7L1044.7,346.6L1046.4,346.3L1050.7,345.8L1054.5,346L1058.1,345.5L1052.8,344.8L1046.9,345.1L1043.1,345ZM1021.2,341.4L1022.3,340.2L1024.2,338.2L1026.7,336.4L1024,334.7L1033.2,334.3L1037.1,334.9L1043.9,335L1046.6,335.8L1049.6,337L1046.1,337.7L1039.5,339.6L1036.1,341.5L1036.1,342.7L1028.9,344L1027.5,342.8L1021.2,341.4ZM1090.9,336L1094.2,336.6L1099.1,336.2L1099.8,337L1097.2,338.3L1101.4,339.5L1100.9,341.9L1096.4,343L1093.8,342.8L1091.9,341.7L1085.1,339.6L1085.2,338.7L1090.7,339.1L1087.7,337.3L1090.9,336ZM1110.5,338.9L1107.6,341L1104.4,340.8L1102.8,338.4L1102.8,337.1L1104.2,335.9L1106.9,335.2L1112.6,335.3L1117.8,335.9L1113.8,338.4L1110.5,338.9ZM1147,333L1145.1,333.8L1141,334.4L1137.8,334L1129.9,334.4L1124.3,334.5L1119.9,334.1L1112.6,333.3L1111.7,331.8L1111.3,330.4L1108.6,329.2L1102.9,328.9L1099.8,328L1100.8,326.9L1106.4,327.1L1109.5,328L1114.8,328L1117.2,328.9L1116.6,329.9L1119.7,330.5L1121.4,331.2L1125.1,331.3L1129.1,331.5L1133.4,330.9L1139,330.7L1143.4,330.9L1146.3,331.9L1147,333ZM1177.9,310.7L1185.3,310.9L1191,311.3L1196,312L1195.9,312.7L1189.3,313.9L1182.7,314.5L1180.2,315.1L1186.1,315.1L1179.7,316.7L1175.2,317.5L1170.6,319.7L1164.9,320.2L1163.2,320.7L1155,321L1158.7,321.4L1156.8,321.9L1159.1,323.2L1156.5,324.1L1152.3,324.9L1151,326L1147.2,326.8L1147.5,327.4L1152.2,327.3L1152.3,328L1145,329.6L1137.8,328.9L1129.8,329.3L1125.8,328.9L1120.6,328.8L1120.2,327.5L1125.3,326.9L1124,324.9L1125.6,324.7L1132.9,325.9L1129.2,324.1L1124.8,323.6L1127,322.6L1131.8,321.9L1132.6,321L1128.7,319.9L1127.6,318.5L1135,318.6L1137.2,318.9L1141.5,317.9L1135.3,317.6L1125.8,317.8L1120.9,316.8L1118.7,315.7L1115.5,315L1114.9,314L1118.9,313.5L1122.1,313.4L1127.5,313L1131.5,311.9L1134.9,312.1L1137.8,312.8L1139.9,311.4L1143.5,310.9L1148.4,310.6L1156.7,310.5L1158.2,310.8L1166.1,310.4L1172,310.5L1177.9,310.7ZM1125.2,318.3L1127.4,320.1L1130.7,321L1126.9,321.8L1121.8,323.8L1117,324L1111.4,323.7L1108.4,322.6L1108.5,321.6L1110.6,320.9L1105.6,320.9L1102.6,320L1100.9,318.7L1102.8,317.5L1104.7,316.7L1107.5,316.5L1106.3,315.9L1112.6,315.7L1116.1,317.2L1120.7,317.8L1125.2,318.3ZM1069.5,329.6L1070.6,330.5L1073.1,330.1L1075.8,330.2L1076.4,331.5L1074.7,332.8L1065.4,333.2L1058.6,334.5L1054.5,334.5L1054.1,333.6L1059.7,332.4L1047.4,332.7L1043.6,332.2L1047.3,329.6L1049.9,328.8L1057.5,329.7L1062.4,331.3L1067.2,331.5L1063.3,328.9L1065.8,327.9L1068.6,328.2L1069.5,329.6ZM1106,331.1L1108.3,332L1107.9,333.9L1103.9,333.7L1100.6,333L1102,331.8L1106,331.1ZM1096,328.1L1098.1,329.4L1098.2,330.8L1096.9,332.8L1092.4,333.1L1089.5,332.7L1089.6,331.1L1085.1,331.3L1084.9,329.2L1087.9,329.3L1092,328.3L1095.8,328.5L1096,328.1ZM1047.7,325.6L1047.3,327.7L1045.3,328.6L1042.7,328.8L1037.6,330L1033.2,330.4L1029.6,329.8L1034.2,327.7L1039.8,326L1044,326L1047.7,325.6ZM1076.9,321.1L1089.7,322.5L1092.7,324.9L1088.4,324.6L1083.7,323.8L1077.7,323.5L1080.5,322.7L1077.2,322.2L1076.9,321.1ZM1101.7,325.2L1107.2,325.2L1109.1,325.7L1108.8,326L1102.3,325.9L1101.7,325.2ZM1095.7,322.2L1099.3,322.5L1103.9,323.5L1103.4,324.5L1099.3,325L1097.1,324.4L1095.7,323.3L1095.7,322.2ZM1064.1,325.5L1059,326.3L1055.1,325.5L1057.3,324.5L1061.1,324.2L1065,324.6L1064.1,325.5ZM1103.8,348.9L1102.1,349.9L1098.4,349L1096.2,349.3L1092.5,348.1L1094.9,347.3L1096.8,346.1L1099.7,346.9L1101.3,347.3L1102.1,347.9L1103.8,348.9ZM1145.5,336.2L1151.8,336.5L1156.5,338L1156.7,338.7L1153.8,338.7L1150.9,338.6L1147.9,339L1147.1,338.8L1144.1,337.4L1144.2,336.4L1145.5,336.2ZM1138,367.8L1136.1,367.8L1135.6,367.1L1137.6,365.8L1141.3,365.8L1141.3,366.4L1138,367.8ZM1146.8,367.2L1147.9,367.3L1148.4,367.9L1147.3,369.4L1146.2,369.1L1145.4,368.3L1146.8,367.2ZM1157.4,353L1153.9,353L1154.1,354.4L1157.4,354.7L1159.6,353.6L1157.7,352.2L1155,351.5L1157.7,351.1L1159.9,351.9L1159.9,353L1157.4,353ZM1148.4,393.1L1143,392.6L1141,392.9L1143.8,393.4L1148.4,393.1Z"/>
<path fill="#662506" d="M1029.7,403.8L1105.2,403.8L1105.2,402.7L1106.1,403L1106.7,404.3L1109.4,404.9L1112.1,405.3L1114.8,406.2L1117,406L1120.3,406.5L1121.1,406.8L1123.6,405.7L1133.1,409.5L1134.2,410.6L1136.7,411.7L1136.9,412.2L1139.7,413.9L1140.8,418.5L1140,420.2L1138,422.6L1140,423.7L1143,422.3L1146,421.8L1149.2,420.4L1149.2,419.3L1150,418.5L1155.2,418.5L1156.1,417.4L1159.3,415.2L1160.4,414.7L1169.7,414.7L1170,414L1171.9,413.6L1173,412.2L1173.8,410.1L1176,408.1L1176.5,408.7L1178.7,408.3L1179.8,409L1179.8,412.8L1181.7,414.4L1182,415.2L1179.2,416.6L1176.2,417.4L1173.5,418.2L1172.2,419.9L1171.6,421.2L1171.3,422.1L1172.4,423.4L1173.8,422.9L1174.1,423.7L1172.2,424.2L1170.5,424.2L1168.3,424.8L1165.6,425.1L1163.7,425.9L1167.8,425.3L1168.3,425.7L1163.1,426.7L1162.9,427.2L1162.3,429.2L1160.4,431.3L1158.8,429.7L1159.9,431.6L1159.9,432.7L1158.2,434.1L1157.7,436L1156.9,433L1156.3,430.5L1156.1,431.9L1156.6,434.1L1156.6,436.5L1157.4,436.8L1158.2,440.3L1158.8,441.4L1156.3,442.5L1153.3,443.6L1152,445L1149.2,446.1L1146.8,448.3L1144,450.2L1143,451.8L1142.4,453.7L1143,455.6L1145.1,459.7L1146.2,464.1L1146.2,467.1L1145.4,468.7L1143.5,468.7L1141.9,466.8L1140.5,464.6L1139.1,462.5L1138.6,458.1L1136.4,455.9L1135.3,455.4L1132.6,456.7L1130.7,455.1L1129,454.5L1126,454.8L1123.6,454.5L1121.4,454.8L1120.3,455.1L1120.8,457L1120.8,457.8L1118.7,458.1L1114.8,456.4L1110.5,456.2L1108.8,456.4L1106.4,457L1103.9,459.2L1101.2,460.3L1099.8,461.6L1099,462.7L1099,464.6L1099.3,466L1099.8,466.8L1098.7,467L1096.8,466.3L1094.6,465.5L1093.8,464.4L1093.3,462.5L1091.6,460.8L1089.5,457.3L1087.3,456.2L1085.1,456.2L1083.5,458.4L1081.3,457.5L1079.6,456.7L1079.1,455.4L1078.3,454L1076.6,452.6L1074.2,450.9L1069.5,450.9L1069.5,452.1L1061.9,452.1L1055.6,450.2L1051.5,448.8L1051.8,448.3L1045.3,448.8L1044.7,447.4L1043.1,445.8L1041.7,445.5L1041.4,444.7L1039.8,444.4L1039,443.8L1036.2,443.5L1035.7,443.1L1035.4,441.4L1032.7,438.7L1031.9,436.8L1030.5,435.2L1030.5,434.3L1029.2,433.5L1027.2,431.2L1026.7,428.9L1025.3,427.5L1025.9,425.3L1025.9,422.9L1025.1,420.7L1026.2,418.2L1026.4,415.8L1026.7,413.3L1026.2,409.5L1025.3,407.3L1024.5,406L1024.8,405.4L1028.9,406.5L1030.2,409L1031.1,408.1L1030.5,406L1029.7,403.8ZM1008.7,388L1010.1,386.6L1010.1,384.9L1005.4,383.2L1002.7,380L1000.8,378.1L998.3,376.8L996.7,375.7L995,374.3L992.3,375.1L989.6,376.8L987.4,374.9L985.5,373.8L982.8,372.9L980,372.9L980,347.3L972.9,346.1L967.2,346.2L960.9,345.4L953.6,345.4L949.5,344.3L943.7,344.6L941.6,343.3L937.5,342.8L933.6,344.3L930.9,344L925.7,345.2L922.7,345.7L920,346.9L916.2,349.5L911.3,349.5L909.6,351L913.4,351.9L917.3,353L918.1,354.4L922.7,354.7L923.5,357.1L918.1,355.7L915.9,355.7L910.7,358.2L906.1,358.3L909.9,359.8L911,360.9L914.5,361.8L920,361.5L924.4,360.7L926,360.7L925.5,362.3L926,363.4L924.1,364.2L921.9,364.2L919.7,365.4L915.6,365.2L914.3,366.9L911.5,369.7L913.7,372.4L917.3,374.2L921.4,373.8L922.7,375.7L923,377.4L927.1,376.5L932.3,377L936.4,376.8L934.9,378.4L934.5,380.3L932.3,381.4L928.2,383.6L923.3,384.9L919.7,387.7L915.1,389L914.8,388.5L920,388.5L924.9,386.6L929.3,385.8L933.4,383.3L938.3,380.9L944,378.9L946.5,376.8L944.6,375.5L947.3,374L948.4,373.5L950,371.8L952.7,371L953.8,370.2L956.3,371L951.6,371.8L950.3,374.6L950.8,376.1L955.5,374.9L959.3,374L960.9,373.8L960.4,371.8L963.4,371.3L966.4,371.8L971.8,373.8L975.7,373.5L980,374L983,375.1L987.4,376.5L988.8,377.9L992,378.7L996.4,379.2L999.1,381.9L1000.8,384.9L1004.6,386L1005.4,387.7ZM947.3,381.7L944.6,382.8L943.2,381.9L942.6,380.6L945.1,379.8L946.7,379.3L948.4,379.5L949.7,380.3L947.3,381.7ZM910.4,391L906.9,392L905.3,392.3L907.4,391L910.2,390.1ZM896.3,363.4L897.9,363.9L899.5,363.7L901.7,364.5L904.4,364.8L904.2,365L902.3,365.6L900.1,365L899,364.5L896.5,364.8L896,364.5L896.3,363.4ZM911.5,372.7L912.6,372.9L912.9,374L911.3,374.4L909.5,374L907.8,373.2L910.4,372.7ZM940.5,485.4L939.9,485.9L939.4,485.4L939.4,484.8L938.8,483.7L939.4,482.9L939.4,482.2L941.3,482.9L942.4,484.3L940.5,485.4ZM938.8,481.1L938,481.3L937.2,480.5L937.5,480.2L938.4,480.5L939.1,480.9ZM934.5,479.4L933.4,479.4L933,478.8L933.6,478.3L934.6,479.4ZM930,477.5L929.5,477.7L928.7,477.3L929.3,476.9L929.9,476.9Z"/>
<path fill="#fee79b" d="M1133.1,477.7L1135.6,475.6L1138.9,474.7L1142.7,474.5L1144.9,474.5L1148.4,476.4L1151.1,476.1L1154.4,478.3L1156.1,479.6L1158.5,480.2L1160.4,481L1162.3,482.1L1162.1,482.8L1158.5,483.2L1152.8,483.3L1154.4,481.8L1153.3,481L1151.7,481L1150.6,480.2L1150,478.6L1148.4,478.7L1146,478L1141.6,476.9L1140.5,476.4L1141.6,475.8L1138.9,475.6L1136.9,476.9L1135.6,477.7L1133.1,477.7Z"/>
<path fill="#e0e0e0" d="M1152.2,517.9L1153.3,519.2L1153.9,521.7L1153.3,522.2L1153.9,524.7L1153.3,526.3L1154.4,527L1153.3,528.5L1152.2,530.1L1150.9,530.4L1150,531.2L1150.3,532.6L1149.3,532.9L1149.6,533.7L1152.3,535.3L1152.9,535.2L1153.5,536.4L1155.8,536.8L1156.6,536.4L1158,537.3L1159.1,537.9L1159.8,537.7L1161.7,538.9L1162.5,540.2L1163.8,540.9L1165.4,543.8L1167.4,544.1L1169,543.4L1169.9,543.9L1171.6,543.7L1173.7,545L1171.9,547.7L1172.7,547.8L1174.1,549.2L1175.3,541.8L1175.4,540.6L1174.9,539L1173.7,538L1173.7,536L1175.3,535.6L1175.8,535.9L1175.9,534.8L1174.3,534.5L1174.3,532.8L1179.6,532.9L1180.5,531.9L1181.3,532.8L1181.8,534.4L1182.3,534.1L1181.5,531.4L1180.7,530.4L1179.8,529.8L1181.2,528.4L1181,527.8L1180.3,527L1179.7,525.2L1180,523.3L1180.6,522.3L1181,520.9L1180.1,520.4L1176.5,520.6L1175.5,520.9L1173.5,518.5L1172,518.2L1168.4,518.4L1167.8,517.5L1167.1,517.3L1167,516.7L1167.3,515.7L1167.1,514.6L1166.2,512.7L1165.5,510.9L1165.9,509L1168.3,505.8L1170.2,505.4L1170,503.7L1169,503.6L1167.7,504.9L1164.5,506.9L1162.3,506.6L1162.1,507.2L1160.4,507.3L1158.8,508.5L1158.3,511.7L1157.2,512L1155.1,513.9L1153.7,513.8Z"/>
<path fill="#e0e0e0" d="M1201.7,514.7L1200.7,514L1199.2,511.8L1196.7,510.5L1194.5,510.3L1193.7,509.1L1195.9,508.3L1193.7,508.2L1189.3,509.1L1187.7,509.9L1185.6,509.7L1184.1,508.4L1178.7,508.7L1178.6,507.8L1176.8,506.3L1174.9,506.2L1173.4,506.4L1174,504.3L1173,505.2L1170.1,507.6L1170,509.7L1171.1,510.6L1170.4,512.6L1169.2,512.7L1168.1,510.6L1169.2,509L1169.3,507.6L1168.5,506.3L1170.2,505.4L1168.3,505.8L1165.9,509L1165.5,510.9L1166.2,512.7L1167.1,514.6L1167.3,515.7L1167,516.7L1167.1,517.3L1167.8,517.5L1168.4,518.4L1172,518.2L1173.5,518.5L1175.5,520.9L1176.5,520.6L1180.1,520.4L1181,520.9L1180.6,522.3L1180,523.3L1179.7,525.2L1180.3,527L1181,527.8L1181.2,528.4L1179.8,529.8L1180.7,530.4L1181.5,531.4L1182.3,534.1L1183.8,535.5L1185.9,535.3L1186.5,534.5L1188.5,533.9L1189.6,533.4L1189.9,532.3L1191.9,531.5L1191.7,530.9L1189.4,530.7L1189,529L1189.2,527.1L1187.9,526.4L1188.4,526.2L1190.5,526.5L1192.6,527.2L1193.4,526.6L1195.4,526.1L1198.4,525.1L1199.4,524.1L1199.1,523.3L1197.2,521.2L1198,520.5L1197.9,519.2L1199.6,518.8L1200.3,518.3L1199.3,517.3L1199.6,516.3L1201.7,514.7Z"/>
<path fill="#e0e0e0" d="M1208.9,521.2L1207.8,520.3L1206.3,518.9L1205.3,518.9L1205.2,517.4L1203.5,515.7L1201.7,514.7L1199.6,516.3L1199.3,517.3L1200.3,518.3L1199.6,518.8L1197.9,519.2L1198,520.5L1197.2,521.2L1199.1,523.3L1200.5,523.2L1201.1,523.8L1200.8,525L1201.7,525.4L1202.3,526.7L1201.6,527.6L1201.2,530L1201.8,531.4L1202,532.6L1203.7,533.9L1205.1,534L1205.4,533.5L1206.2,533.4L1207.5,532.9L1208.3,532.2L1209.9,532.4L1210.5,532.3L1208.9,529.9L1208.5,528.4L1207.6,528.4L1206.4,526.4L1206.9,525L1206.8,524.4L1208.4,523.7L1208.9,521.2Z"/>
<path fill="#e0e0e0" d="M1217.6,521.8L1214.6,521L1212.4,521.3L1210.5,521.3L1208.9,521.2L1208.4,523.7L1206.8,524.4L1206.9,525L1206.4,526.4L1207.6,528.4L1208.5,528.4L1208.9,529.9L1210.5,532.3L1212,532.5L1212.2,532L1211.8,531.4L1212.1,530.7L1213.2,530.9L1214.5,530.6L1216,531.2L1216.7,530L1217,528.8L1217.4,527.6L1216.4,526L1216.1,524.1L1217.6,521.8Z"/>
<path fill="#e0e0e0" d="M1223.8,526.1L1223.4,525L1220.5,522.7L1217.6,521.8L1216.1,524.1L1216.4,526L1217.4,527.6L1217,528.8L1216.7,530L1216,531.2L1217.2,531.7L1218.1,531L1218.7,531.1L1219,531.9L1220.3,531.7L1221.4,530.7L1222.2,528.7L1223.8,526.1Z"/>
<path fill="#e0e0e0" d="M1149.6,533.7L1147.9,534.8L1146.2,535.3L1146.5,536.5L1144.9,540L1144,540.4L1144.4,542.8L1144,543.6L1145.4,544.9L1146.5,543.5L1147,544.8L1145.7,546.8L1146,547.9L1145.2,548.6L1145.3,549.6L1146.4,549.4L1147.5,549.6L1148.7,551L1150.2,549.9L1150.7,548.1L1152.4,545.7L1155.7,544.6L1158.7,541.8L1159.5,540L1159.1,537.9L1158,537.3L1156.6,536.4L1155.8,536.8L1153.5,536.4L1152.9,535.2L1152.3,535.3L1149.6,533.7Z"/>
<path fill="#e0e0e0" d="M1175.1,567.4L1177.4,571.8L1176.8,572.7L1176.7,574.6L1176.7,576.9L1175.6,578.3L1176.1,579.3L1175.5,580.2L1176.6,582.5L1174.9,585.5L1176.2,587.3L1176.6,589.3L1178,590.5L1177.2,593.1L1178.6,596.1L1179.7,599.9L1181.7,599.6L1184,597.1L1187.5,597.8L1189.1,599.7L1190.2,597.5L1193.3,597.6L1193.7,598.2L1194.8,594.9L1194.9,593.5L1196.2,591.1L1201,590.3L1203.5,590.3L1206,591.7L1206.1,592.6L1206.9,592L1206.7,590.4L1207.4,589.2L1207.9,587.1L1207.3,585.4L1205.8,584.6L1205.5,583.6L1205.9,582L1200.6,581.9L1199.6,578.7L1200.4,578.7L1200.4,577.5L1199.8,576.7L1199.7,575.1L1198.1,574.3L1196.4,574.3L1195.3,573.5L1193.4,573L1192.3,572L1189.3,571.5L1186.3,569.1L1186.6,567.2L1186.2,566.2L1186.5,564.1L1182.9,564.6L1181.5,565.6L1179.1,566.7L1178.5,567.5L1177.1,567.6L1175.1,567.4Z"/>
<path fill="#e0e0e0" d="M1206.1,592.6L1206,591.7L1203.5,590.3L1201,590.3L1196.2,591.1L1194.9,593.5L1194.8,594.9L1193.7,598.2L1198.8,602.7L1201,603.1L1204.3,605.1L1207.1,606.2L1207.5,607.4L1204.8,611.5L1207.6,612.3L1210.7,612.7L1212.8,612.2L1215.3,610.1L1215.7,607.7L1216.3,606.2L1216.7,604.6L1216.7,603.1L1215.7,602.6L1214.6,603L1213.6,602.9L1213.3,601.8L1213.1,599.3L1212.5,598.5L1210.7,597.8L1209.6,598.3L1206.7,597.8L1206.9,594.1L1206.1,592.6Z"/>
<path fill="#e0e0e0" d="M1205.4,630L1207,631.5L1211.5,632.6L1212.9,632.3L1214.9,632.9L1218,631.4L1219.2,629.7L1218.4,628.1L1219.6,626.8L1218,625L1215.9,623.4L1213.1,621.7L1212.1,621.8L1209.3,619.7L1207.5,620L1206.9,622.2L1206.2,624.9L1206.2,627.7L1205.6,628.3L1205.4,630Z"/>
<path fill="#e0e0e0" d="M1197.8,679L1201.1,677.4L1203.4,678L1205,677L1207.2,678.2L1206.4,679.1L1202.7,680L1201.5,679L1199.2,680.2L1197.8,679Z"/>
<path fill="#fee391" d="M1219.2,629.7L1221,628.1L1224.1,624.2L1226.5,622L1228.5,616.9L1231.4,615.7L1232,610.1L1232.5,608.1L1234.8,605.4L1238,603.2L1243,601.2L1247.3,600.2L1250.2,600.2L1250.9,598.5L1253.1,597.4L1253.6,594.5L1256.3,591L1256.8,587.3L1257.7,586.3L1258.5,581.2L1258.7,580.3L1258.5,575.1L1259.3,573.1L1262,570.7L1263.7,567.6L1267.7,563.8L1269,562.1L1270,557.5L1268.7,552.4L1265.2,551.4L1263.2,550.7L1259.8,547.6L1255.7,545.3L1251.6,545.4L1246.3,544L1243.2,544.8L1243.6,543.3L1242.3,541.7L1237.7,540.1L1234.3,539.1L1232.2,540.9L1232.1,538.2L1227.3,537.7L1226.5,536.9L1228.4,532.8L1225.4,527.5L1224.8,526.2L1223.8,526.1L1222.2,528.7L1221.4,530.7L1220.3,531.7L1219,531.9L1218.7,531.1L1218.1,531L1217.2,531.7L1216,531.2L1214.5,530.6L1213.2,530.9L1212.1,530.7L1211.8,531.4L1212.2,532L1212,532.5L1210.5,532.3L1209.9,532.4L1208.3,532.2L1207.5,532.9L1206.2,533.4L1205.4,533.5L1205.1,534L1203.7,533.9L1202,532.6L1201.8,531.4L1201.2,530L1201.6,527.6L1202.3,526.7L1201.7,525.4L1200.8,525L1201.1,523.8L1200.5,523.2L1199.1,523.3L1199.4,524.1L1198.4,525.1L1195.4,526.1L1193.4,526.6L1192.6,527.2L1190.5,526.5L1188.4,526.2L1187.9,526.4L1189.2,527.1L1189,529L1189.4,530.7L1191.7,530.9L1191.9,531.5L1189.9,532.3L1189.6,533.4L1188.5,533.9L1186.5,534.5L1185.9,535.3L1183.8,535.5L1182.3,534.1L1181.8,534.4L1181.3,532.8L1180.5,531.9L1179.6,532.9L1174.3,532.8L1174.3,534.5L1175.9,534.8L1175.8,535.9L1175.3,535.6L1173.7,536L1173.7,538L1174.9,539L1175.4,540.6L1175.3,541.8L1174.1,549.2L1171.6,549.1L1169,550L1165.9,551.9L1165.7,553.2L1165,554.1L1165.3,555.6L1163.6,556.4L1163.6,557.5L1162.9,558L1164,560.5L1165.5,562.1L1165,563.3L1166.8,563.5L1167.8,564.9L1170.2,565L1172.5,563.4L1172.3,567.5L1173.5,567.8L1175.1,567.4L1177.1,567.6L1178.5,567.5L1179.1,566.7L1181.5,565.6L1182.9,564.6L1186.5,564.1L1186.2,566.2L1186.6,567.2L1186.3,569.1L1189.3,571.5L1192.3,572L1193.4,573L1195.3,573.5L1196.4,574.3L1198.1,574.3L1199.7,575.1L1199.8,576.7L1200.4,577.5L1200.4,578.7L1199.6,578.7L1200.6,581.9L1205.9,582L1205.5,583.6L1205.8,584.6L1207.3,585.4L1207.9,587.1L1207.4,589.2L1206.7,590.4L1206.9,592L1206.1,592.6L1206.9,594.1L1206.7,597.8L1209.6,598.3L1210.7,597.8L1212.5,598.5L1213.1,599.3L1213.3,601.8L1213.6,602.9L1214.6,603L1215.7,602.6L1216.7,603.1L1216.7,604.6L1216.3,606.2L1215.7,607.7L1217.1,607.2L1218.5,608.8L1218.4,611L1216.1,612.5L1214.3,613.6L1211.2,616.2L1207.5,620L1209.3,619.7L1212.1,621.8L1213.1,621.7L1215.9,623.4L1218,625L1219.6,626.8L1218.4,628.1L1219.2,629.7Z"/>
<path fill="#fee391" d="M1145.7,546.8L1143.5,548.5L1142.7,550.4L1144,553.1L1143.1,554.3L1147,557.1L1148,559.1L1151.7,565.9L1154.4,570.8L1156.7,574.3L1156.3,575.2L1159.6,579.3L1164.5,582.1L1169.7,584.9L1172.8,587.6L1174.2,586.9L1174.9,585.5L1176.6,582.5L1175.5,580.2L1176.1,579.3L1175.6,578.3L1176.7,576.9L1176.7,574.6L1176.8,572.7L1177.4,571.8L1175.1,567.4L1173.5,567.8L1172.3,567.5L1172.5,563.4L1170.2,565L1167.8,564.9L1166.8,563.5L1165,563.3L1165.5,562.1L1164,560.5L1162.9,558L1163.6,557.5L1163.6,556.4L1165.3,555.6L1165,554.1L1165.7,553.2L1165.9,551.9L1169,550L1171.6,549.1L1174.1,549.2L1172.7,547.8L1171.9,547.7L1173.7,545L1171.6,543.7L1169.9,543.9L1169,543.4L1167.4,544.1L1165.4,543.8L1163.8,540.9L1162.5,540.2L1161.7,538.9L1159.8,537.7L1159.1,537.9L1159.5,540L1158.7,541.8L1155.7,544.6L1152.4,545.7L1150.7,548.1L1150.2,549.9L1148.7,551L1147.5,549.6L1146.4,549.4L1145.3,549.6L1145.2,548.6L1146,547.9L1145.7,546.8Z"/>
<path fill="#fee89f" d="M1177.7,680.2L1177.1,678.8L1176.1,675.9L1177.3,674.7L1179.7,673.6L1181.5,670.4L1185.7,666.4L1183.1,665.8L1180.4,663.9L1181.2,661.8L1183.3,660.4L1185.9,660.4L1186.5,658.9L1186.9,656.2L1189.1,654.5L1190.8,652.2L1191.6,653.6L1189.1,653.1L1187.1,649.6L1187.5,648.8L1190.8,649.9L1193.6,649.5L1195.2,648.5L1194.7,643.5L1197.7,643.7L1203.2,643.2L1207.2,641.7L1210,636.9L1208.3,635.7L1208.6,633.8L1205.2,631.5L1205.4,630L1205.6,628.3L1206.2,627.7L1206.2,624.9L1206.9,622.2L1207.5,620L1211.2,616.2L1214.3,613.6L1216.1,612.5L1218.4,611L1218.5,608.8L1217.1,607.2L1215.7,607.7L1215.3,610.1L1212.8,612.2L1210.7,612.7L1207.6,612.3L1204.8,611.5L1207.5,607.4L1207.1,606.2L1204.3,605.1L1201,603.1L1198.8,602.7L1193.7,598.2L1193.3,597.6L1190.2,597.5L1189.1,599.7L1187.5,597.8L1184,597.1L1181.7,599.6L1179.7,599.9L1181.1,603.1L1178.1,604.4L1178.2,609L1177.6,609.8L1178.4,610.9L1176.5,612.6L1174.7,615.2L1173.8,617.7L1174,620.3L1172.3,623.1L1173.6,627.8L1174.3,628.3L1174.3,630.8L1172.7,633.5L1172.8,635.8L1170.7,637.5L1170.7,640.1L1171.6,642.7L1169.9,643.7L1169.2,646.1L1168.6,648.9L1169,652.3L1167.9,652.8L1168.6,656L1169.8,657L1168.9,658.1L1170.2,658.7L1170.5,659.7L1169.3,660.2L1169.6,661.8L1168.6,665.4L1167.1,667.8L1167.4,669.1L1166.6,670.9L1164.5,672.1L1164.7,675L1165.7,676L1167.5,675.8L1167.4,677.9L1168.6,679.4L1175.2,679.8L1177.7,680.2ZM1177.5,681.2L1178.6,682.4L1179.9,684.5L1183.5,686.1L1187.3,686.8L1186.1,688.1L1183.5,688.3L1182.1,687.3L1180.4,687.2L1177.5,687.2L1177.5,681.2Z"/>
<path fill="#fee595" d="M1172.8,587.6L1173.4,591.4L1173.5,595.9L1172.7,601.9L1171.9,607.6L1171.1,612.8L1169.7,616.3L1170.1,619.6L1169.2,621.8L1169.9,625.9L1168.7,630L1166.8,634.4L1165.1,638.7L1164,638.9L1164.2,642L1165.1,644.6L1163.7,646.5L1162.8,651.6L1162.1,655.4L1163.7,655.9L1164.5,652.4L1166.4,653.2L1165.1,658.8L1161.9,657.8L1161,662.4L1161.9,664.5L1158.5,664.8L1159.7,667.7L1162.5,665.6L1164,668.2L1161.2,668.5L1158.8,675L1160.2,676.8L1159.4,678.4L1160.3,680.1L1163.7,681.7L1167.2,684.1L1170.8,685.1L1171.1,684.3L1171.5,681.9L1175.6,680.8L1177.7,680.2L1175.2,679.8L1168.6,679.4L1167.4,677.9L1167.5,675.8L1165.7,676L1164.7,675L1164.5,672.1L1166.6,670.9L1167.4,669.1L1167.1,667.8L1168.6,665.4L1169.6,661.8L1169.3,660.2L1170.5,659.7L1170.2,658.7L1168.9,658.1L1169.8,657L1168.6,656L1167.9,652.8L1169,652.3L1168.6,648.9L1169.2,646.1L1169.9,643.7L1171.6,642.7L1170.7,640.1L1170.7,637.5L1172.8,635.8L1172.7,633.5L1174.3,630.8L1174.3,628.3L1173.6,627.8L1172.3,623.1L1174,620.3L1173.8,617.7L1174.7,615.2L1176.5,612.6L1178.4,610.9L1177.6,609.8L1178.2,609L1178.1,604.4L1181.1,603.1L1179.7,599.9L1178.6,596.1L1177.2,593.1L1178,590.5L1176.6,589.3L1176.2,587.3L1174.9,585.5L1174.2,586.9L1172.8,587.6ZM1177.5,681.2L1177.5,687.2L1180.4,687.2L1182.1,687.3L1181.2,688.4L1178.8,689.3L1177.5,689.2L1175.9,689L1173.9,688.1L1171.1,687.7L1167.6,686.2L1164.8,684.8L1161.1,681.7L1163.3,682.3L1167.2,684.1L1170.8,685.1L1172.2,683.8L1173.1,681.9L1175.6,680.8L1177.5,681.2Z"/>
<path fill="#e0e0e0" d="M1403.4,390.8L1405.2,390L1409.5,388.7L1412.9,387.8L1415.6,388.3L1415.9,388.9L1418.5,389L1419.1,387.8L1422.9,386.9L1422.3,384.6L1422.4,382.5L1423.7,380.8L1426.3,379.9L1428.5,381.9L1430.6,381.9L1431.2,379.8L1431.5,378.2L1430.5,378.5L1428.8,377.6L1428.5,376L1432,375.2L1435.4,374.8L1438.4,375.3L1441.2,375.2L1441.6,375.7L1439.6,377.3L1440.5,379.8L1439.3,380.7L1440.6,381.3L1440.8,382.6L1441.7,384.2L1444.6,384.9L1445,385.6L1446.4,385.2L1449.1,385.9L1449.3,387.2L1448.8,387.9L1450.5,389.7L1451.6,390.2L1451.4,390.7L1453.3,391.2L1454,391.9L1453,392.5L1450.8,392.4L1450.3,392.7L1450.9,393.6L1451.6,395.3L1452.6,395.4L1453.3,394.8L1454.1,394.9L1456.9,394.7L1458.7,396.2L1458,396.8L1458.2,397.6L1460.4,397.7L1461.4,398.9L1461.3,399.5L1464.8,400.4L1466.9,400L1468.5,401.3L1470.1,401.2L1474.2,402.1L1474.2,402.9L1473.1,404.4L1473.7,405.9L1473.3,406.8L1470.6,407L1469.2,407.7L1469.1,409L1467,409.2L1465.1,410.1L1462.6,410.2L1460.2,411.2L1460.4,412.9L1461.7,413.6L1464.5,413.4L1464,414.4L1461,414.9L1457.3,416.4L1455.8,415.9L1456.4,414.6L1453.4,413.8L1453.9,413.3L1456.5,412.4L1455.7,411.7L1451.4,411.1L1451.3,410L1448.7,410.4L1447.7,411.9L1445.6,413.9L1445.7,414.6L1444.3,415.2L1443.5,414.9L1442.8,418.2L1441.3,419.4L1440.3,421.3L1441.2,422.9L1441.6,423.9L1436.8,423.7L1435.9,426.1L1434.3,426L1432.9,425.7L1429.5,426.5L1431.4,428L1430,428.4L1428.5,428.4L1427.1,427L1426.6,427.6L1427.2,429.3L1428.5,430.6L1427.5,431.2L1429,432.4L1430.4,433.2L1430.4,434.7L1427.9,434L1428.7,435.4L1427,435.7L1428,438.1L1426.2,438.1L1424,437L1422.9,434.8L1422.5,433L1421.4,431.7L1420,430.1L1419.8,429.4L1419.3,429.2L1419.3,428.6L1417.8,427.7L1417.5,426.3L1417.8,424.5L1418.1,423.6L1417.7,423.2L1417.1,423L1416.3,422.1L1415.2,421.6L1412.6,420.6L1411,419.6L1408.5,418.8L1406.2,416.8L1406.8,416.6L1405.5,415.4L1405.5,414.5L1403.7,414.1L1402.9,415.2L1402.1,414.3L1402.2,413.4L1402.3,413.3L1402.5,410.6L1398,408.9L1393.3,409.5L1390.7,409L1391,407.8L1397.6,401L1403.4,390.8ZM1429.5,440.1L1431,441L1433.1,440.8L1435.1,441L1436.6,441.2L1436.2,442L1432.3,442.2L1432.3,441.8L1429,441.2L1429.5,440.1ZM1427.6,431.2L1429.2,431.6L1430.6,432.2L1431.8,433.5L1430.9,433.8L1429.2,432.4L1427.6,431.2Z"/>
<path fill="#e0e0e0" d="M1441.7,343.2L1450.2,345.2L1446.7,346L1449.7,347.7L1445.1,348.8L1442.8,349L1444,347.1L1440.5,346L1436.3,346.9L1434.9,349L1432.3,350.2L1429.4,349.5L1425.8,349.6L1422.8,348.2L1421.2,348.9L1419.5,349L1419.1,350.8L1413.9,350.4L1413.2,351.9L1410.6,351.9L1408.8,353.8L1406.1,356.9L1401.8,360.7L1402.8,361.6L1401.9,362.7L1399.2,362.7L1397.4,365.2L1397.5,368.8L1399.3,370.2L1398.4,373.4L1396.1,375.3L1394.9,376.9L1393.1,375.2L1387.7,378.4L1384.1,379L1380.3,377.6L1379.3,374.7L1378.4,368.4L1380.9,366.6L1388.2,364.3L1393.6,361.5L1398.6,357.7L1405.1,352.4L1409.7,350.4L1417.2,347L1423.2,345.8L1427.6,345.9L1431.8,343.7L1436.8,343.8L1441.7,343.2ZM1432.3,325L1426.2,326.2L1421.4,325.5L1423.3,324.8L1421.6,324L1427.3,323.4L1428.4,324.4L1432.3,325ZM1406.1,320.1L1407.2,319.1L1411.2,319L1414.6,320L1423.6,322L1416.8,323.1L1415.2,325.1L1412.8,325.6L1411.5,327.9L1408.2,328L1402.4,326.3L1404.9,325.3L1400.8,324.6L1395.4,322.3L1393.3,320.1L1400.8,319.2L1402.3,320.1L1406.1,320.1ZM1439.6,319L1435.6,320.5L1427.6,320.8L1419.6,320.4L1419.1,319.6L1415.2,319.6L1412.2,318.3L1420.7,317.5L1424.6,318.2L1427.4,317.4L1434.3,318.1L1439.6,319Z"/>
<path fill="#e0e0e0" d="M1356.6,377.5L1353.7,380.4L1356.5,380.1L1359.5,380.1L1358.8,382.3L1356.3,384.8L1359.1,384.9L1361.8,388.4L1363.6,388.9L1365.3,392L1366.1,393.1L1369.4,393.6L1369.1,395.3L1367.7,396.1L1368.8,397.5L1366.3,398.9L1362.7,398.9L1358,399.7L1356.7,399.1L1354.9,400.4L1352.4,400.1L1350.5,401.2L1349,400.6L1353.1,397.7L1355.5,397.1L1351.2,396.7L1350.4,395.6L1353.3,394.8L1351.8,393.3L1352.3,391.5L1356.4,391.8L1356.8,390.2L1354.9,388.4L1351.6,388L1351,387.2L1351.9,386L1351,385.3L1349.6,386.6L1349.4,383.9L1348,382.5L1349,379.7L1351.1,377.5L1353.3,377.7L1356.6,377.5ZM1349.4,388.6L1347.9,390.5L1345.9,389.9L1344.2,390L1344.7,388.5L1344.2,387.1L1346.5,386.9L1349.4,388.6ZM1347.9,390.5L1348.4,392.5L1346.3,394.9L1341.5,396.5L1337.6,396.1L1339.8,393.2L1338.4,390.5L1342.1,388.3L1344.2,387.1L1344.7,388.5L1344.2,390L1345.9,389.9L1347.9,390.5Z"/>
<path fill="#e0e0e0" d="M1340.2,423.2L1341.2,422.5L1342.3,422.1L1343,423.5L1344.6,423.5L1345,423.1L1346.6,423.2L1347.4,424.6L1346.1,425.3L1346.1,427.4L1345.6,427.8L1345.5,429.1L1344.4,429.3L1345.4,431L1344.7,432.8L1345.6,433.6L1345.3,434.3L1344.2,435.4L1344.5,436.3L1343.4,437L1340.5,436.9L1340.9,434.8L1340.7,433.1L1339.5,432.8L1338.8,431.8L1339,430L1340.1,429L1340.3,424.1L1340.2,423.2ZM1381.3,400.7L1381.8,401.3L1381.7,402.5L1380.9,402.6L1380.3,402.3L1380.6,400.8Z"/>
<path fill="#fedc87" d="M1340.2,423.2L1340.3,421.3L1339.2,420.1L1343,418.1L1346.4,418.6L1350.1,418.6L1352.9,419.1L1355.2,418.9L1359.6,419L1360.7,420.1L1365.7,421.3L1366.7,420.7L1369.8,422L1373,421.6L1373.1,423.2L1370.5,425L1367,425.6L1366.8,426.5L1365.1,428L1364.1,430.2L1365.1,431.8L1363.5,433L1363,434.8L1360.9,435.3L1359,437.4L1355.5,437.5L1352.9,437.4L1351.2,438.4L1350.1,439.4L1348.8,439.2L1347.8,438.2L1347,436.7L1344.5,436.3L1344.2,435.4L1345.3,434.3L1345.6,433.6L1344.7,432.8L1345.4,431L1344.4,429.3L1345.5,429.1L1345.6,427.8L1346.1,427.4L1346.1,425.3L1347.4,424.6L1346.6,423.2L1345,423.1L1344.6,423.5L1343,423.5L1342.3,422.1L1341.2,422.5L1340.2,423.2ZM1373,428.6L1374.1,429.2L1373.3,430.3L1371.4,429.7L1373,428.6Z"/>
<path fill="#fedc87" d="M1359.6,419L1361.1,417.4L1361.6,411.9L1358.7,409.1L1356.7,407.7L1352.6,406.6L1352.3,404.7L1355.8,404.1L1360.4,404.8L1359.6,401.7L1362.1,402.8L1368.5,400.7L1369.3,398.5L1371.7,397.9L1372.1,398.9L1373.3,398.9L1374.6,400L1376.5,401.3L1377.9,401.1L1380.3,402.3L1380.9,402.6L1381.7,402.5L1383,403.2L1386.9,403.7L1385.5,405.6L1385.2,407.5L1384.4,408L1383.2,407.8L1383.3,408.4L1381.3,410L1381.2,411.2L1382.6,410.8L1383.5,412L1383.4,412.8L1384.2,413.8L1383.2,414.6L1383.9,416.7L1385.4,417.1L1385.1,418.3L1382.6,419.8L1377.3,419.1L1373.3,419.9L1373,421.6L1369.8,422L1366.7,420.7L1365.7,421.3L1360.7,420.1L1359.6,419ZM1388.7,421.2L1390.4,420.1L1390.9,422.5L1390,424.6L1388.8,424L1388.1,422.2L1388.7,421.2Z"/>
<path fill="#fed06b" d="M1383.7,391.6L1384.2,391L1386.5,390.8L1387,391.4L1388.8,390.1L1388.2,389L1388.1,387.5L1390.1,387.9L1391.9,387.5L1391.9,388.5L1394.7,389.2L1394.7,390.1L1397.5,389.6L1399,388.9L1402.1,389.9L1403.4,390.8L1404,392.2L1403.2,392.9L1404.2,393.9L1404.9,395.3L1404.7,396.3L1405.8,398L1404.6,398.3L1403.9,398L1403.2,398.5L1401.2,399.1L1400.2,399.7L1398.2,400.3L1398.7,401.1L1399,402.3L1400.4,402.9L1401.9,404.1L1401,405.4L1400,405.7L1400.4,407.5L1400.1,408L1399.3,407.4L1398,407.3L1396,407.8L1393.6,407.7L1393.2,408.4L1391.8,407.7L1391,407.8L1388.1,407L1387.5,407.6L1385.2,407.5L1385.5,405.6L1386.9,403.7L1383,403.2L1381.7,402.5L1381.8,401.3L1381.3,400.7L1381.6,398.9L1381.2,396L1382.8,396L1383.5,395L1384.2,392.5L1383.7,391.6Z"/>
<path fill="#fee08b" d="M1371.7,397.9L1373.9,397.4L1375.9,397.6L1378.4,397L1380.1,398.2L1381.6,398.9L1381.3,400.7L1380.6,400.8L1380.3,402.3L1377.9,401.1L1376.5,401.3L1374.6,400L1373.3,398.9L1372.1,398.9L1371.7,397.9Z"/>
<path fill="#fee59a" d="M1373.9,397.4L1375.3,396.6L1377.7,392.6L1381.4,391.5L1383.7,391.6L1384.2,392.5L1383.5,395L1382.8,396L1381.2,396L1381.6,398.9L1380.1,398.2L1378.4,397L1375.9,397.6L1373.9,397.4Z"/>
<path fill="#fee08b" d="M1388.1,387.5L1390.1,387.9L1391.9,387.5L1391.2,386.1L1393.1,384.2L1393.9,384.5L1394.6,383.4L1393.1,383L1392.8,382.2L1393.6,381.3L1393.7,380L1391.5,380.7L1390.5,381.5L1388.1,381.6L1387.4,382.5L1386.9,383.2L1387,386L1388.1,387.5ZM1398.6,384.4L1399.5,385.7L1397.8,388L1394.9,386.4L1394.6,385.3L1398.6,384.4Z"/>
<path fill="#fee595" d="M1383.5,412L1384.7,412.6L1386,412.5L1387.5,411.5L1388,411.9L1389.3,411.9L1389.9,410.8L1391.9,411.1L1393.1,410.7L1393.3,409.5L1391.9,409.5L1390.7,409L1391.1,408.3L1391,407.8L1388.1,407L1387.5,407.6L1385.2,407.5L1384.4,408L1383.2,407.8L1383.3,408.4L1381.3,410L1381.2,411.2L1382.6,410.8L1383.5,412Z"/>
<path fill="#fee89e" d="M1385.1,418.3L1385.4,417.1L1383.9,416.7L1383.2,414.6L1384.2,413.8L1383.4,412.8L1383.5,412L1384.7,412.6L1386,412.5L1387.5,411.5L1388,411.9L1389.3,411.9L1389.9,410.8L1391.9,411.1L1393.1,410.7L1393.3,409.5L1395,409.9L1395.3,409.4L1398,408.9L1398.6,409.9L1402.5,410.6L1402.2,411.9L1402.9,413.1L1400.7,412.7L1398.5,413.7L1398.6,415L1398.3,415.8L1399.2,417.2L1401.7,418.5L1403.1,420.8L1406.1,423L1408.3,423L1408.9,423.6L1408.2,424.1L1410.6,425.1L1412.6,425.9L1415,427.4L1415.3,427.9L1414.7,428.9L1413.2,427.6L1410.9,427.1L1409.7,428.9L1411.7,429.9L1411.3,431.3L1410.2,431.5L1408.8,433.8L1407.6,434L1407.6,433.2L1408.2,431.8L1408.8,431.2L1407.7,429.6L1406.9,428.2L1405.8,427.9L1404.9,426.7L1403.2,426.2L1402,425.1L1400,424.9L1397.9,423.7L1395.4,421.9L1393.5,420.3L1392.7,417.6L1391.3,417.3L1389.1,416.4L1387.8,416.8L1386.2,418.1L1385.1,418.3ZM1407.2,433.2L1406.2,435.3L1406.6,436.2L1406,437.6L1404,436.5L1402.6,436.3L1398.7,434.9L1399.1,433.4L1402.3,433.7L1405.1,433.4L1407.2,433.2ZM1390,425L1391.6,427L1391.2,430.6L1390,430.4L1388.9,431.3L1387.8,430.6L1387.7,427.3L1387.1,425.7L1388.6,425.9L1390,425Z"/>
<path fill="#fee9a4" d="M1402.5,410.6L1404.7,410.8L1406.1,410.2L1408.5,410.1L1409,409.6L1409.5,409.7L1410,410.6L1407.9,411.3L1407.6,412.4L1406.6,412.7L1406.7,413.5L1405.6,413.4L1404.7,413L1404.1,413.4L1402.3,413.3L1402.9,413.1L1402.2,411.9L1402.5,410.6Z"/>
<path fill="#fee9a4" d="M1416.3,402.4L1416.4,402.6L1417.5,402.2L1418.9,403.2L1420.5,402.6L1421.8,402.9L1423.8,402.5L1426.4,403.5L1425.6,404.2L1425.1,405.4L1424.5,405.6L1421.6,404.8L1420.7,405L1420.1,405.6L1418.8,406L1418.5,405.8L1417.1,406.2L1416.1,406.3L1415.9,406.8L1413.6,407.2L1412.6,406.9L1411.2,406.2L1410.9,405.2L1411.1,404.9L1411.5,404.3L1412.7,404.3L1413.6,404.1L1413.7,403.8L1414.2,403.7L1414.4,403L1415,402.9L1415.4,402.4L1416.3,402.4Z"/>
<path fill="#fee9a4" d="M1426.8,406.8L1428,406.2L1429.7,406.5L1431.4,406.6L1432.7,407.2L1433.6,406.8L1435.6,406.5L1436.3,405.9L1437.5,405.9L1438.3,406.2L1439.1,407L1440,408.1L1441.6,409.8L1441.7,411L1441.4,412.1L1441.9,413.4L1443.1,413.9L1444.4,413.4L1445.6,413.9L1445.7,414.6L1444.3,415.2L1443.5,414.9L1442.8,418.2L1441.2,417.9L1439.2,416.9L1436,417.6L1434.6,418.3L1430.6,418.1L1428.5,417.7L1427.4,417.9L1426.7,416.8L1426.1,416.3L1426.8,415.8L1426.1,415.5L1425.3,416.1L1423.7,415.3L1423.4,414.2L1421.8,413.5L1421.5,412.7L1420,411.6L1422.2,411.1L1423.8,409.3L1425.1,407.4L1426.8,406.8Z"/>
<path fill="#fee391" d="M1430,357.4L1425.3,358.2L1422.7,360L1423.1,361.7L1418.8,363.9L1413.5,366.3L1411.5,370.1L1413.5,372L1416.1,373.5L1413.6,376.6L1410.7,377.3L1409.7,381.8L1408.2,384.4L1404.9,384.1L1403.3,386.3L1400.1,386.4L1399.3,383.8L1397,380.7L1394.9,376.9L1396.1,375.3L1398.4,373.4L1399.3,370.2L1397.5,368.8L1397.4,365.2L1399.2,362.7L1401.9,362.7L1402.8,361.6L1401.8,360.7L1406.1,356.9L1408.8,353.8L1410.6,351.9L1413.2,351.9L1413.9,350.4L1419.1,350.8L1419.5,349L1421.2,348.9L1424.8,350.2L1429.1,352.1L1429.1,356.3L1430,357.4ZM1414.5,381.9L1416.4,380.9L1416.9,379.5L1415,379.8L1414.2,381.1Z"/>
<path fill="#fee391" d="M1442.8,349L1442.5,350.9L1446.6,352.7L1444.1,354.8L1447.3,357.9L1445.4,360.3L1447.9,362.3L1446.8,364.1L1450.8,365.9L1449.8,367.3L1447.3,368.9L1441.4,372.4L1436.5,372.6L1431.7,373.6L1427.2,374.2L1425.6,372.7L1423,371.8L1423.6,369.1L1422.3,366.6L1423.6,365.1L1426.1,363.3L1432.3,360.4L1434.1,359.8L1433.8,358.7L1430,357.4L1429.1,356.3L1429.1,352.1L1424.8,350.2L1421.2,348.9L1422.8,348.2L1425.8,349.6L1429.4,349.5L1432.3,350.2L1434.9,349L1436.3,346.9L1440.5,346L1444,347.1L1442.8,349Z"/>
<path fill="#e0e0e0" d="M1348.6,439.9L1350.7,439.9L1352.3,441.1L1354.9,440.9L1357.7,441.5L1358.9,441.5L1361.5,440L1364.5,439.6L1366.2,438.4L1368.8,437.6L1373.4,437.1L1378,436.9L1379.3,437.3L1381.9,436.2L1384.8,436.2L1385.9,436.8L1387.8,436.7L1390.8,435.6L1392.7,435.9L1392.6,437.3L1394.9,436.3L1395.1,436.8L1393.7,438.1L1393.7,439.4L1394.7,440.1L1394.3,442.4L1392.5,443.8L1393,445.3L1394.5,445.3L1395.1,446.7L1396.2,447.1L1399.4,448L1400.5,447.8L1402.8,448.2L1406.4,449.4L1407.7,451.9L1410.1,452.4L1414,453.6L1416.9,454.9L1418.2,454.2L1419.5,452.9L1418.9,450.9L1419.8,449.5L1421.7,448.2L1423.6,447.9L1427.3,448.4L1428.2,449.7L1429.3,449.7L1430.1,450.1L1432.8,450.4L1433.5,451.3L1437.1,451.3L1439.8,452L1442.5,452.8L1443.7,453.3L1445.8,452.4L1447,451.6L1449.4,451.4L1451.3,451.7L1452,453.1L1452.7,452.2L1454.8,452.8L1457,453L1458.3,452.3L1460.1,457L1459.4,458.1L1458.8,460.2L1458,461.6L1457.4,462L1456.5,461.2L1455.3,459.9L1453.3,456L1453,456.3L1454.1,459.2L1455.8,461.9L1457.9,466.2L1458.9,467.6L1459.8,469.2L1462.2,472.2L1461.7,472.7L1461.8,474.5L1464.9,476.9L1465.4,477.5L1466.3,480.1L1465.7,480.6L1466.1,483.4L1467.1,486.7L1469.6,488.4L1471.3,491.5L1472,494.1L1473.5,495.4L1477.2,498L1478.7,499.5L1481,502L1482.4,502.8L1483,503.7L1483,504.8L1481.4,505.5L1482.6,506.2L1483.4,506.7L1484,507.9L1485.2,509L1486.6,509L1489.2,508.3L1492.1,508L1494.5,507.1L1495.9,507L1496.8,506.4L1498.4,506.4L1499.3,506.3L1500.5,505.9L1502,505.6L1503.3,504.7L1504.3,504.7L1504.4,505.4L1504.1,507L1504.1,508.5L1503.5,509.4L1502.8,512.4L1501.5,515.4L1499.8,518.9L1497.4,522.9L1495.1,526L1491.9,529.7L1489.2,531.9L1485.1,534.6L1482.5,536.7L1479.5,540L1478.9,541.5L1478.3,542.1L1476.4,543.2L1475.7,544.3L1474.7,544.5L1474.3,546.5L1473.4,547.5L1472.9,549.4L1471.8,550.3L1470.5,553.6L1470.7,555.2L1472.5,556.2L1472.5,556.9L1471.8,558.5L1471.9,559.4L1471.8,560.7L1472.7,562.4L1473.8,565.1L1474.9,565.7L1475.3,566.9L1475.2,569.6L1475.5,572L1475.6,576.3L1476.1,577.6L1475.3,579.6L1474.2,581.4L1472.5,583.1L1470,584.2L1466.9,585.5L1463.8,588.4L1462.8,588.9L1460.9,590.9L1459.8,591.5L1459.5,593.4L1460.8,595.5L1461.3,597.1L1461.4,597.9L1461.9,597.8L1461.8,600.5L1461.3,601.7L1462,602.2L1461.6,603.3L1460.4,604.3L1458.2,605.2L1454.9,606.7L1453.7,607.7L1453.9,608.9L1454.7,609.1L1454.4,610.5L1453.7,612.5L1453.4,614.7L1452.7,616L1450.8,617.4L1450.3,617.7L1449.1,619.1L1448.4,620.5L1446.9,622.5L1443.8,625.3L1441.8,626.9L1439.8,628.2L1436.9,629.2L1435.5,629.4L1435.2,630.1L1433.5,629.7L1432.2,630.3L1429.2,629.7L1427.6,630.1L1426.4,629.9L1423.6,631L1421.3,631.4L1419.6,632.5L1418.4,632.5L1417.2,631.5L1416.3,631.5L1415.1,630.3L1415,630.7L1414.6,629.9L1414.6,628.3L1413.8,626.5L1414.6,626L1414.5,623.9L1412.8,621.4L1411.4,619L1409.4,615.5L1407.4,613.4L1406.3,611.4L1405.7,608.8L1405,606.8L1404.1,602.6L1404.1,599.3L1403.7,597.8L1402.7,596.7L1401.3,594.5L1399.8,591.2L1399.2,589.5L1397,586.8L1396.8,584.7L1396.6,583L1397,580.6L1397.9,578.1L1398.1,576.9L1398.9,574.5L1399.6,573.4L1401.1,571.6L1402,570.4L1402.3,568.3L1402.2,566.8L1401.4,565.8L1400.6,564.2L1400,562.5L1400.1,562L1401,560.9L1400.1,558.2L1399.6,556.4L1398.2,554.7L1398.4,554.1L1398.1,553.3L1397.3,551.3L1395.1,548.4L1392.3,545.6L1390.5,543.3L1388.8,540.5L1388.9,539.6L1389.5,538.8L1390.2,536.8L1390.7,534.7L1390.2,534.3L1391.2,531.3L1391.6,529.1L1390.5,527.3L1389.2,526.9L1388.7,525.6L1388,525.2L1388,524.5L1385.2,525.5L1384.1,525.3L1383.1,525.9L1380.9,525.9L1379.4,524.2L1378.5,522.2L1376.6,520.4L1374.6,520.4L1372.2,520.4L1369.9,520.7L1367.7,521.3L1363.4,522.9L1361.9,523.9L1359.5,524.6L1357,523.9L1355.8,523.9L1353.9,523.4L1352.1,523.4L1348.9,523.9L1347,524.6L1344.3,525.7L1343.8,525.6L1343.1,525.6L1340.3,524.3L1337.8,522.2L1335.4,520.7L1333.6,519L1332.9,518.8L1330.9,517.7L1329.5,516.2L1329,515.2L1328.7,513.2L1327.5,511.6L1326.4,510.5L1325.7,510.2L1325,509.6L1324.7,508.4L1324.3,507.8L1323.5,507.4L1322.1,506.2L1320.9,506.1L1320.3,505.3L1320.3,504.9L1319.5,504.3L1319.3,503.7L1318.9,501.6L1319.2,500.4L1318.1,498.3L1316.7,497.3L1317.9,496.8L1319.2,494.9L1319.9,493.5L1319.7,492L1320.4,490.6L1320.7,488.1L1320.4,485.4L1320.1,484L1320.4,482.7L1319.7,481.4L1318.3,480.2L1318.4,479L1318.5,477.8L1319.5,477L1320.4,475.6L1320.3,474.7L1321.2,472.8L1322.7,471L1323.6,470.6L1324.4,469L1324.4,467.5L1325.4,465.9L1327.2,464.9L1329,462.1L1330.4,461L1332.9,460.7L1335.1,458.8L1336.4,458.1L1338.7,455.8L1338,452.4L1339.1,450.1L1339.4,448.6L1341.2,446.8L1343.9,445.5L1346,444.4L1347.8,441.6L1348.6,439.9ZM1500,571.5L1500.8,572.7L1501.4,574.5L1501.9,577.8L1502.6,579.1L1502.3,580.4L1501.8,581.2L1500.9,579.6L1500.4,580.4L1500.9,582.4L1500.6,583.6L1499.9,584.2L1499.7,586.5L1498.7,589.7L1497.3,593.4L1495.6,598.6L1494.6,602.4L1493.4,605.6L1491.1,606.2L1488.7,607.4L1487.2,606.7L1485,605.7L1484.2,604.3L1484.1,601.8L1483.1,599.7L1482.8,597.7L1483.3,595.7L1484.6,595.2L1484.6,594.3L1485.9,592.3L1486.2,590.6L1485.5,589.2L1485,587.5L1484.8,585L1485.7,583.5L1486.1,581.8L1487.5,581.7L1489,581.1L1490,580.6L1491.2,580.6L1492.8,579L1495,577.3L1495.8,576L1495.5,574.8L1496.6,575.1L1498.1,573.2L1498.2,571.6L1499.1,570.4L1500,571.5ZM1553,670.2L1554.7,671.1L1557.3,671.4L1557.4,671.9L1556.6,673.2L1552.4,673.3L1552.4,671.9L1552.8,670.8L1553,670.2Z"/>
<path fill="#fee391" d="M1433.5,451.3L1437.1,451.3L1439.8,452L1442.5,452.8L1443.7,453.3L1445.8,452.4L1447,451.6L1449.4,451.4L1451.3,451.7L1452,453.1L1452.7,452.2L1454.8,452.8L1457,453L1458.3,452.3L1460.1,457L1459.4,458.1L1458.8,460.2L1458,461.6L1457.4,462L1456.5,461.2L1455.3,459.9L1453.3,456L1453,456.3L1454.1,459.2L1455.8,461.9L1457.9,466.2L1458.9,467.6L1459.8,469.2L1462.2,472.2L1461.7,472.7L1461.8,474.5L1464.9,476.9L1465.4,477.5L1454.6,477.5L1444,477.5L1433,477.5L1433,467.4L1433,457.7L1432.2,455.5L1432.9,453.8L1432.5,452.7L1433.5,451.3Z"/>
<path fill="#fee79b" d="M1372.2,520.4L1372.3,516L1372.2,514.3L1372.8,512.6L1373.6,511.7L1374.9,510L1374.6,509.3L1375.2,508.2L1374.6,506.6L1374.7,505.7L1374.9,503.3L1375.7,502.1L1376,500.6L1376.7,500L1379.7,499.6L1382.4,500.7L1383.4,501.7L1384.8,501.8L1386.1,501.1L1389.4,502.5L1390.8,502.4L1392.4,501.3L1394,501.3L1394.8,501L1396.3,501.1L1398.4,501.9L1400.5,500.4L1401.2,500.5L1403,503.5L1403.5,503.4L1404.6,504.5L1404.3,505L1404.2,505.9L1401.9,508L1401.1,509.8L1400.8,511.2L1400.2,511.8L1399.6,513.7L1398.2,514.8L1397.7,516.2L1397.1,517.3L1396.9,518.5L1395,519.4L1393.5,518.2L1392.4,518.3L1390.8,519.9L1390,519.9L1388.7,522.5L1388,524.5L1385.2,525.5L1384.1,525.3L1383.1,525.9L1380.9,525.9L1379.4,524.2L1378.5,522.2L1376.6,520.4L1374.6,520.4L1372.2,520.4Z"/>
<path fill="#e0e0e0" d="M1463.5,439.7L1462.8,440.9L1463,443L1461.6,445L1460.7,447.2L1460.2,447.9L1459.7,450L1458.9,451.2L1458.3,452.3L1460.1,457L1460.2,457.4L1459.9,458.5L1459.3,460.9L1460.7,460.9L1462.1,462.8L1463.7,465L1464.8,467L1465.6,467.6L1466.2,469.7L1467.1,471.2L1468.6,471.8L1469.9,472.8L1471.4,475.9L1471.6,479.4L1473.4,482L1474.7,482.5L1476.5,484.3L1477.3,486.5L1478.8,488.8L1480.2,489.8L1480.4,490.9L1481.2,491.7L1481.6,492.9L1481.7,494.1L1481.3,494.6L1481.6,495.9L1481.9,497.1L1482.4,499.1L1482.8,499.9L1482.8,501.4L1483.5,503L1485.4,503.1L1487.6,502.8L1488,502.2L1488.7,501.9L1489.3,501.2L1492.3,500.9L1494,500.4L1495.6,499.3L1496.5,499.4L1497.7,499.3L1500.1,497.4L1504.5,496.1L1507.2,494.9L1507.2,494L1509.8,492.1L1512.8,491L1514.3,491.2L1515.7,490.5L1515.7,489.4L1516.7,488.7L1518.4,488.7L1519,488.1L1519.3,486.8L1521,485.8L1522.3,485.8L1522.5,485.5L1523.2,481.6L1524.4,481.7L1525.4,479.9L1526.6,479L1527,478.3L1528,476.6L1528,476L1527.1,475.7L1526.3,474.8L1525.1,473.2L1523.5,472.7L1521.5,472.3L1520,471.3L1518.7,469.5L1518.4,467.3L1519,465.7L1518.6,465.5L1517.8,466.4L1516.1,468.1L1514.1,469.8L1512.2,471.7L1510.5,471.6L1508.3,471.5L1506.2,471.9L1505.6,471.3L1505.1,470.3L1505.7,468.7L1505.6,467.1L1504.8,466.2L1504,466.5L1503.3,468L1503.5,470L1503.1,469.3L1501.9,467.6L1501.6,466.7L1501.8,465.8L1501.7,464.7L1499.8,463.5L1499.4,462.6L1498,461.9L1497,459.6L1496.1,457.5L1496.3,456.9L1495.7,455.7L1497.4,455.8L1498.4,454.8L1500.1,455.7L1501.6,455.2L1503.6,458.9L1505.4,461.4L1508,462.2L1510.8,464.3L1514.2,465.2L1516.9,463.9L1519,463.4L1520.3,463.9L1521.5,467.3L1524.5,467.6L1527.5,468.2L1532.7,469.1L1536.5,468.7L1540.9,468.6L1545.9,468.1L1548.1,470.2L1548.9,472.2L1550.9,472.8L1569.5,469.3L1596.8,469.3L1614.5,474.7L1616.9,481.1L1618.8,483.3L1620.4,483.7L1620.1,484.6L1622.2,487.8L1622.8,490.3L1621.9,493.7L1623.6,494.4L1625.1,494.6L1628.2,492.7L1630,491.3L1631.2,493.6L1631.7,497L1632.5,500.3L1633.7,501.7L1633.4,504.7L1634.3,506.3L1633.8,510.4L1633,513L1632.7,514.7L1633.2,516.2L1633.6,514.6L1635,515.9L1636.4,517.5L1636.9,518.8L1638,519.9L1638.3,523L1639.2,524.5L1639.6,526.7L1641.2,528.6L1641.5,530L1644.7,532.1L1647.3,534.1L1649.3,534L1649.3,533.1L1647.1,529.9L1646.8,527.3L1646.9,524.2L1645.8,522.4L1644.2,520.8L1643.6,520.5L1644.8,504.2L1642.3,503L1640,503L1640.4,500.9L1638,500.9L1637.8,503.9L1636.6,505.1L1636.3,507.9L1635.4,510.3L1635.6,512.3L1637.4,512.4L1638.5,514.8L1639,517.2L1640.5,518.8L1642.1,519.1L1643.6,520.5L1644.8,504.2L1646.2,507.1L1647.3,508.5L1649.5,508.9L1651.6,510.4L1650.8,512.3L1651.8,514L1655.2,511.5L1657.4,509.2L1660.6,507.5L1662.8,505.7L1663.2,500.8L1662,495.8L1660.3,493.6L1657.8,491.9L1655.3,488.4L1653.2,485.5L1656.1,481L1659.7,478.7L1659.6,469.3L1673.2,433.8L1686.8,422.9L1700.5,424.2L1704,428.5L1705.2,429.3L1706.8,429.6L1707,430L1706.3,431.5L1706.5,432L1705.2,433.5L1706.6,434.2L1706.7,434.7L1709.1,434.5L1712.8,433.3L1715.1,432.1L1713.5,430.9L1712.5,430.5L1712.8,429L1714.1,428.3L1715.9,427.8L1717.4,426.5L1718.8,425.9L1718.7,424L1719.5,423L1720.7,422.1L1721.7,422.3L1722.3,414.7L1692.3,395.6L1637.7,395.6L1583.1,395.6L1528.6,395.6L1490.4,406.5L1479.4,417.4L1473.9,419L1477.9,421.1L1478.6,423L1478.2,424.1L1474,428.3L1465.8,436.5L1463.5,439.7ZM1454.1,441.6L1454.3,441.6L1454.7,440.9L1456.7,441L1459.2,440.2L1457.3,441.3L1457.6,442L1454.8,443.2L1453.5,442.8L1452.9,441.7L1454.1,441.6ZM1588,517L1587.6,519.8L1586.5,520.6L1584.1,521.2L1582.8,519.1L1582.3,515.1L1583.5,510.7L1585.4,512.2L1586.7,514.1L1588,517ZM1697.2,470.9L1695.5,475.3L1694.3,477.5L1692.9,475.3L1692.6,473.2L1694.2,470.5L1696.4,468.5L1697.6,469.3L1697.2,470.9Z"/>
<path fill="#ffffff" d="M1498.8,410.9L1497.6,412.5L1494.9,412.9L1492.2,415.8L1494.7,418.4L1494.4,420.2L1497.4,423.4L1498.8,424.8L1500.2,426.8L1501.5,426.9L1502.3,427.6L1500.1,427.8L1499.6,430L1499.1,430.9L1498.2,431.6L1498.2,432.9L1499.1,434.9L1501.7,435.5L1503.6,436.9L1507.4,437.3L1511.7,436.6L1512,436L1511.5,434L1511.9,431.2L1509.7,430.3L1510.4,428.4L1508.6,428.3L1509.2,425.9L1511.8,426.6L1514.2,425.7L1512.2,424.1L1511.4,422.6L1509.2,423.2L1508.9,425.2L1508.1,423.5L1508,422.8L1508.6,421.7L1508.1,420.7L1504.9,419.8L1503.7,417.3L1502.2,416.7L1502.1,415.8L1504.8,416L1504.9,414L1507.2,413.6L1509.6,414L1510.1,411.3L1509.6,409.6L1506.8,409.8L1504.5,409.1L1501.4,410.3L1498.8,410.9Z"/>
<path fill="#fec960" d="M1449.7,347.7L1452.5,346.7L1457,348.4L1464.5,349L1474.8,352.1L1476.9,353.4L1477.1,355.2L1474,356.6L1469.6,357.4L1457.4,355.3L1455.4,355.7L1459.8,357.7L1460,358.9L1460.2,361.7L1463.7,362.5L1465.8,363.3L1466.2,361.9L1464.5,360.8L1466.3,359.7L1472.9,361.4L1475.2,360.8L1473.3,358.8L1479.7,356.1L1482.2,356.2L1484.8,357.2L1486.3,355.3L1484.1,353.7L1485.4,352.1L1483.4,350.4L1491,351.2L1492.6,352.8L1489.2,353.1L1489.2,354.6L1491.3,355.6L1495.5,355L1496.2,353.2L1501.9,351.9L1511.4,349.6L1513.5,349.7L1510.8,351.4L1514.2,351.7L1516.1,350.7L1521.2,350.6L1525.3,349.5L1528.4,351.2L1531.5,349.4L1528.6,347.8L1530.1,346.9L1538.1,347.7L1541.9,348.6L1551.8,351.7L1553.6,350.2L1550.8,348.8L1550.8,348.2L1547.5,348L1548.4,346.7L1546.9,344.5L1546.8,343.7L1551.9,341.2L1553.7,338.7L1555.7,338.2L1562.9,338.9L1563.5,340.4L1560.9,342.6L1562.6,343.5L1563.5,345.4L1562.8,349.1L1565.9,350.8L1564.7,352.6L1559.3,356.5L1562.5,356.9L1563.5,355.9L1566.5,355.2L1567.3,353.9L1569.6,352.6L1568,351L1569.3,349.2L1566.3,349L1565.7,347.5L1567.9,344.8L1564.3,342.5L1569.2,340.7L1568.6,338.7L1569.9,338.7L1571.4,340.2L1570.3,342.8L1573.2,343.3L1572,341.4L1576.5,340.3L1582.2,340.1L1587.2,341.7L1584.8,339.4L1584.5,336.5L1589.3,336L1595.9,336.1L1601.8,335.7L1599.5,334.3L1602.7,332.5L1605.8,332.4L1611.1,331.1L1618.3,330.7L1619.2,330L1626.4,329.7L1628.7,330.3L1634.8,328.9L1639.8,328.9L1640.6,327.7L1643.2,326.6L1649.6,325.5L1654.3,326.4L1650.6,327L1656.7,327.4L1657.5,328.8L1660,328.1L1668,328.2L1674.1,329.5L1676.3,330.5L1675.6,331.9L1672.6,332.7L1665.4,334.2L1663.4,335.1L1666.8,335.4L1670.8,336.1L1673.3,335.6L1674.6,337.4L1675.8,336.7L1680.2,336.2L1689,336.7L1689.6,338L1701,338.4L1701.2,336.3L1707,336.8L1711.3,336.7L1715.7,338.2L1717,339.9L1715.4,341.1L1718.8,343.2L1723.1,344.3L1725.7,341.4L1730.1,342.7L1734.8,341.9L1740.1,342.8L1742,342L1746.5,342.4L1744.6,339.9L1748.2,338.7L1772.8,340.5L1775.1,342.1L1782.3,344.2L1793.3,343.7L1798.7,344.1L1801,345.2L1800.7,347.2L1804,348L1807.7,347.5L1812.5,347.4L1817.7,347.9L1822.9,347.6L1827.6,350L1831,349.2L1828.8,347.4L1830,346.2L1838.7,347L1844.4,346.8L1852.2,348.1L1856,349.3L1856,360.2L1852.5,361.4L1849,361.2L1851.4,362.6L1853.1,364.9L1854.3,365.6L1854.6,366.7L1853.9,367.5L1848.8,366.9L1841.2,368.9L1838.8,369.3L1834.6,371.2L1830.7,372.8L1829.7,374.1L1825.7,372.2L1818.6,374.3L1817.4,373.3L1814.8,374.5L1811.1,374.1L1810.2,375.9L1807,378.6L1807.1,379.7L1810.2,380.3L1809.8,384.2L1807.3,384.3L1806.1,386.6L1807.2,387.8L1802.5,389.2L1801.5,392.3L1797.4,393L1796.6,395.8L1792.7,398.3L1791.7,396.4L1790.5,392.4L1789,386.4L1790.3,382.6L1792.6,381L1792.8,379.7L1797,379.1L1801.9,375.6L1806.6,372.8L1811.5,370.6L1813.7,366.8L1810.4,367L1808.7,369.3L1801.8,372.3L1799.5,368.9L1792.5,369.9L1785.7,374.4L1787.9,376.1L1781.8,376.8L1777.6,377.1L1777.8,375.1L1773.6,374.7L1770.2,376.1L1761.9,375.6L1752.9,376.4L1744,381.7L1733.6,388.1L1737.9,388.5L1739.2,390.2L1741.9,390.8L1743.6,389.5L1746.6,389.6L1750.6,392.6L1750.6,394.9L1748.5,397.7L1748.3,400.9L1747,405.3L1742.9,409.2L1742,411.1L1738.3,414.3L1734.7,417.5L1732.9,419.1L1729.3,420.7L1727.5,420.7L1725.8,419.4L1722.2,421.4L1721.7,422.3L1721.3,421.8L1721.3,420.4L1722.7,420.3L1723.1,417.1L1722.4,414.8L1724.7,413.8L1728,414.3L1729.9,411.6L1730.8,408.7L1731.9,407.7L1733.3,405.2L1728.8,406L1726.4,407.1L1722.3,407.1L1721.2,404.5L1718,402.6L1713.2,401.7L1712.2,399L1711.2,397.4L1710.2,396.2L1708.5,393.4L1706.1,392.4L1702,391.6L1698.4,391.7L1695,392.2L1692.8,393.5L1694.3,394.2L1694.3,395.7L1692.8,396.6L1690.3,399.5L1690.4,400.7L1686.5,402.4L1683.2,401.4L1680,401.6L1678.5,400.7L1676.9,400.4L1672.9,402.3L1669.3,402.7L1666.8,403.4L1663.4,403L1660.9,403L1659.2,401.6L1656.5,400.3L1653.8,399.9L1650.3,400.3L1647.8,400.8L1643.9,399.7L1643.4,397.6L1640.1,396.9L1637.7,396.6L1634.6,395.5L1631.8,398.3L1632.9,399.9L1630.2,401.8L1626.3,401.1L1623.6,401L1621.8,399.7L1618.9,399.7L1616.5,398.9L1612.4,400.1L1607.2,402.5L1604.3,403L1603.2,403.2L1601.8,401.5L1598.3,401.9L1597.1,400.7L1595.2,400.2L1593.9,398.6L1592.4,398.1L1588.5,398.8L1584.7,397.3L1583.2,398.7L1577.1,391.8L1573.7,389.6L1574.7,388.8L1567.8,391.4L1565.2,391.5L1565.4,390L1561.9,389.1L1559.1,389.8L1558.2,386.9L1553.3,386.3L1550.9,387.5L1544,388.5L1542.7,389.2L1532.5,390.1L1531.2,391.1L1533.2,392.9L1530.6,393.6L1531.1,394.4L1528.5,395.7L1532.9,397.6L1532.2,398.9L1528.4,398.8L1527.6,399.5L1524.1,398.2L1519.8,398.2L1516.9,399.4L1513.6,398.2L1507.6,396.4L1503.4,396.4L1497.7,399.4L1497.4,401.4L1494.6,399.8L1492.4,402.8L1493.2,403.4L1491.6,405.4L1494,407.3L1496,407.2L1497.7,409L1497.4,410.4L1498.8,410.9L1497.6,412.5L1494.9,412.9L1492.2,415.8L1494.7,418.4L1494.4,420.2L1497.4,423.4L1495.8,424.5L1495.3,425.2L1494.1,425L1492.2,423.3L1491.4,423.3L1489.8,422.6L1488.9,421.5L1486.4,420.9L1484.7,421.4L1484.2,420.9L1480.5,419.6L1476.5,419.1L1474.2,418.7L1473.9,419L1470.4,416.7L1467.3,415.6L1464.9,414L1466.9,413.6L1469.1,411.3L1467.6,410.2L1471.7,409.1L1471.6,408.5L1469.1,409L1469.2,407.7L1470.6,407L1473.3,406.8L1473.7,405.9L1473.1,404.4L1474.2,402.9L1474.2,402.1L1470.1,401.2L1468.5,401.3L1466.9,400L1464.8,400.4L1461.3,399.5L1461.4,398.9L1460.4,397.7L1458.2,397.6L1458,396.8L1458.7,396.2L1456.9,394.7L1454.1,394.9L1453.3,394.8L1452.6,395.4L1451.6,395.3L1450.9,393.6L1450.3,392.7L1450.8,392.4L1453,392.5L1454,391.9L1453.3,391.2L1451.4,390.7L1451.6,390.2L1450.5,389.7L1448.8,387.9L1449.3,387.2L1449.1,385.9L1446.4,385.2L1445,385.6L1444.6,384.9L1441.7,384.2L1440.8,382.6L1440.6,381.3L1439.3,380.7L1440.5,379.8L1439.6,377.3L1441.6,375.7L1441.2,375.2L1444.3,373.7L1441.4,372.4L1447.3,368.9L1449.8,367.3L1450.8,365.9L1446.8,364.1L1447.9,362.3L1445.4,360.3L1447.3,357.9L1444.1,354.8L1446.6,352.7L1442.5,350.9L1442.8,349L1445.1,348.8L1449.7,347.7ZM873.6,349.3L880.3,351.4L887.4,354.1L887.2,355.8L889,356.5L888.4,354.5L895.8,354.9L901.2,357.4L898.5,358.6L894,358.9L893.9,361.6L892.8,362.2L890.3,362.1L888.2,361.1L884.6,360.3L883.9,359.1L881.2,358.7L878.1,359.1L876.6,358.1L877.2,357.1L873.9,357.7L875.2,359L873.6,360.2ZM1426.9,389.2L1421.8,389.3L1418.5,389L1419.1,387.8L1422.9,386.9L1425.7,387.4L1426.9,387.8L1426.6,388.6L1426.9,389.2ZM1550.8,327.5L1541.2,330.8L1532.9,332.1L1524.4,334.7L1520.3,337.4L1516.1,340L1516.6,342.3L1521.8,344.5L1520.2,344.8L1511.3,344.4L1510.6,343.2L1505.6,342.5L1505.3,341L1508,340.4L1507.9,338.9L1513.4,336.6L1510.8,336.2L1517.4,333.8L1516.6,332.6L1522.7,331.2L1531.8,329.4L1540.8,328.9L1545.5,327.9L1550.8,327.5ZM1626.6,315.8L1631.9,317.1L1638.2,319.8L1637.6,322.2L1631.6,322.6L1624,321.8L1619.5,320.7L1617.4,318.8L1613.7,318.3L1620.7,316.4L1626.6,315.8ZM1645.5,321.1L1652.4,322.7L1651.6,323.8L1636.2,324.9L1641.2,321.3L1643.4,321L1645.5,321.1ZM1743.7,329.7L1750.9,329.9L1760.8,331.3L1758.6,333.3L1748.5,333.2L1744,333.9L1738.6,332.1L1740.1,330.2L1743.7,329.7ZM1763.6,332.4L1764.2,331.5L1769.3,331.9L1776.2,332.6L1773,333.7L1768.7,333.4L1763.6,332.4ZM1752.5,335.9L1747,337.4L1746.5,337.3L1749.1,336.2L1752.5,335.9ZM1856,344.2L1853,344.3L1852.6,343.5L1856,342.3ZM873.6,342.3L874,342.2L880.2,343L880,343.4L877.2,344L873.6,344.2ZM1756.8,399L1759.6,403.8L1755.5,402.9L1753.9,406.9L1756.5,409.7L1756.5,411.6L1754.4,409.9L1752.6,412L1752.1,409.8L1752.4,407.1L1752.1,404.2L1752.7,402.1L1752.8,398.5L1751.2,395.8L1751.5,392L1754,390.8L1752.9,389.5L1754.1,389.1L1754.8,391L1755.8,393.6L1755.7,396.2L1756.8,399ZM1504.4,317.7L1500.7,318L1498.2,318.3L1497.9,318.7L1494.7,319.2L1491.7,318.5L1493.3,317.7L1487.2,317.6L1492.5,317.1L1496.7,317.1L1497.2,317.8L1498.8,317.1L1501.4,316.7L1505.4,317.3L1504.4,317.7ZM1498.5,347.8L1501.8,348.7L1500.5,349.7L1497.7,349.7L1496.6,348.7L1498.5,347.8Z"/>
<path fill="#fee18d" d="M1498.8,410.9L1497.4,410.4L1497.7,409L1496,407.2L1494,407.3L1491.6,405.4L1493.2,403.4L1492.4,402.8L1494.6,399.8L1497.4,401.4L1497.7,399.4L1503.4,396.4L1507.6,396.4L1513.6,398.2L1516.9,399.4L1519.8,398.2L1524.1,398.2L1527.6,399.5L1528.4,398.8L1532.2,398.9L1532.9,397.6L1528.5,395.7L1531.1,394.4L1530.6,393.6L1533.2,392.9L1531.2,391.1L1532.5,390.1L1542.7,389.2L1544,388.5L1550.9,387.5L1553.3,386.3L1558.2,386.9L1559.1,389.8L1561.9,389.1L1565.4,390L1565.2,391.5L1567.8,391.4L1574.7,388.8L1573.7,389.6L1577.1,391.8L1583.2,398.7L1584.7,397.3L1588.5,398.8L1592.4,398.1L1593.9,398.6L1595.2,400.2L1597.1,400.7L1598.3,401.9L1601.8,401.5L1603.2,403.2L1601.2,405L1598.9,405.3L1598.7,408L1597.2,409.2L1591.8,408.3L1589.9,413.2L1588.5,413.8L1583.1,414.9L1585.5,419.7L1583.6,420.4L1583.8,421.9L1582.2,421.5L1580.8,420.5L1576.8,420.3L1572.2,420.2L1571.2,420.5L1567.3,419.3L1565.8,419.9L1565.4,421.5L1560.9,420.6L1559.1,421L1558.5,422.1L1556.9,422.7L1553.3,424.6L1552.1,426.5L1551.1,426.5L1550.4,425.2L1546.9,425.1L1546.3,422.9L1545,422.9L1545.2,420.2L1541.9,418.2L1537.3,418.4L1534,418.8L1531.5,416.3L1529.2,415.3L1525,413.3L1524.5,413.1L1517.5,414.7L1517.6,424.8L1516.2,424.9L1514.3,422.8L1512.4,422L1509.3,422.6L1508.1,423.5L1508,422.8L1508.6,421.7L1508.1,420.7L1504.9,419.8L1503.7,417.3L1502.2,416.7L1502.1,415.8L1504.8,416L1504.9,414L1507.2,413.6L1509.6,414L1510.1,411.3L1509.6,409.6L1506.8,409.8L1504.5,409.1L1501.4,410.3L1498.8,410.9Z"/>
<path fill="#fdab3d" d="M1721.3,421.8L1721.3,420.4L1722.7,420.3L1723.1,417.1L1722.4,414.8L1724.7,413.8L1728,414.3L1729.9,411.6L1730.8,408.7L1731.9,407.7L1733.3,405.2L1728.8,406L1726.4,407.1L1722.3,407.1L1721.2,404.5L1718,402.6L1713.2,401.7L1712.2,399L1711.2,397.4L1710.2,396.2L1708.5,393.4L1706.1,392.4L1702,391.6L1698.4,391.7L1695,392.2L1692.8,393.5L1694.3,394.2L1694.3,395.7L1692.8,396.6L1690.3,399.5L1690.4,400.7L1686.5,402.4L1683.2,401.4L1680,406.1L1680.7,407.2L1682.2,406.9L1684.9,407.3L1687,406.3L1689.2,407.2L1691.7,409.1L1691.4,410.1L1689.2,409.8L1685.3,410.1L1683.3,410.9L1681.4,412.7L1677.2,413.8L1674.5,415.2L1671.7,414.7L1670.1,414.4L1668.7,416.2L1669.6,417.2L1670,418.1L1668.1,419L1666.1,420.5L1662.9,421.5L1658.8,421.6L1654.4,422.5L1651.3,424L1650.1,423.1L1646.8,423.1L1642.7,421.5L1640,421.1L1636.4,421.5L1630.8,420.8L1627.8,420.9L1626.1,419.3L1624.9,416.8L1623.2,416.5L1619.9,414.7L1616.2,414.4L1613,413.9L1612,412.7L1613.1,409.5L1611.2,407.4L1607.3,406.3L1605,404.9L1604.3,403L1603.2,403.2L1601.2,405L1598.9,405.3L1598.7,408L1597.2,409.2L1591.8,408.3L1589.9,413.2L1588.5,413.8L1583.1,414.9L1585.5,419.7L1583.6,420.4L1583.8,421.9L1583.5,422.6L1579.2,424L1578.2,425.1L1574.7,425.4L1573.7,427.2L1570.8,426.8L1568.9,427.3L1566.3,428.6L1566.7,429.3L1565.9,429.9L1566.6,432.4L1567.5,432.1L1569.1,432.8L1569,433.8L1569.4,435.4L1569.9,436.2L1572,437.4L1572.7,439.5L1577.2,440.6L1580.2,443.8L1579.9,446.1L1581,447.5L1580.9,448.9L1578.9,448.5L1579.7,451.5L1582.4,453.2L1586.2,455.1L1587.3,454.5L1589.5,455.3L1592.3,457.1L1593.8,457.5L1594.7,458.8L1596.8,459.3L1599,460.5L1602.1,461.2L1605.3,461.4L1607,460.8L1607.2,463L1609,461L1610.5,460.3L1612.4,460.9L1613.9,461L1615.1,461.7L1617.3,461.4L1619.7,459.3L1622.9,457.6L1625.2,458.3L1627.1,457.1L1628.4,458.8L1627.5,460L1630.4,460.4L1632,460.2L1632.9,461.8L1634.1,462.4L1634.2,464.5L1634.1,466.8L1631.5,469.1L1631.2,472.3L1634.1,471.8L1634.7,474.4L1636.4,474.9L1635.6,477.1L1637.7,478.2L1638.9,478.7L1640.9,477.9L1640.9,479L1641.2,479.6L1642.6,479.7L1642.2,476.6L1643.6,476.2L1645.1,475.5L1647.3,475.6L1649.9,475.2L1652.3,473.8L1653.6,474.8L1656.1,475.3L1655.6,476.9L1656.9,478L1659.7,478.7L1661,478.2L1664.6,479.1L1664,480.2L1664.7,482.2L1666.2,482L1667.2,479.1L1670,478.7L1673.9,477.3L1675.4,476L1676.3,476.9L1678,475.6L1681.1,475.3L1684.9,473L1688.6,470.5L1691.2,467.3L1693.4,463.7L1695.4,460.7L1696.9,460.5L1697.6,458.3L1695.7,453.8L1697.5,453L1697.5,451L1695.7,448.9L1694,446.4L1692.9,443.7L1690,442.2L1691.4,440.3L1694,439L1695.3,437.5L1699.2,436.7L1698.7,435.3L1697,435.2L1694.5,434.2L1691.5,436.1L1689.3,435.3L1689.2,434.1L1687,433.6L1685.6,431.8L1687,430.5L1689.6,430.4L1691.3,428.6L1694.4,426.7L1696.8,425.7L1698.2,427.2L1696.1,429L1696.6,430.1L1695.2,431.3L1698.1,430.6L1700.1,429.3L1704,428.5L1706.2,426.8L1709.2,425.3L1711,423.4L1712.3,424.2L1714.7,424.3L1714.3,422.9L1718.5,421.7L1719.6,420.2L1721.3,421.8ZM1665.9,486.5L1663.6,487.8L1661.4,487L1661.3,484.6L1662.6,483.4L1665.6,482.6L1667.2,482.7L1667.8,483.7L1666.6,484.9L1665.9,486.5Z"/>
<path fill="#fecb64" d="M1577.2,440.6L1574.6,442.9L1571.6,443.3L1567.4,442.7L1566.1,443.8L1567,446.2L1568,448.1L1570.2,449.4L1567.9,451L1567.9,453L1565.3,455.7L1563.5,458.5L1560.7,461.3L1557.5,461.1L1554.5,464L1556.3,465.2L1556.6,467.3L1558.1,468.7L1558.7,471L1552.7,471L1550.9,472.8L1554.1,475.2L1554.9,476.2L1553.6,477.2L1557.1,480.5L1559.1,480.8L1563,479.2L1563.5,481.8L1563.5,485.1L1564.4,488.6L1565.5,493.9L1568,497.6L1568.5,499.3L1569.1,502.7L1570.6,505.4L1571.5,506.6L1572.6,509.4L1573.8,513.2L1576.4,515.7L1577.5,515L1578.4,513.1L1580.9,512.3L1580.1,511.4L1581.3,509.4L1582.8,509.2L1582.8,504.6L1583.9,502L1583.8,499.7L1583.2,496.2L1584,494.1L1585.3,494L1587.8,493L1589.1,492.3L1589.1,491.1L1591.8,489.3L1593.9,487.6L1596.9,484.3L1600.9,482.5L1602.3,480.9L1602.2,478.8L1605.5,478.3L1607.4,478.3L1607.8,477.3L1607.4,475.1L1606.4,473L1606.9,471.4L1605.2,470.6L1605.8,469.6L1607.5,468.6L1605.5,467.2L1606.5,465.3L1608.7,466.5L1610,466.6L1610.2,468.5L1612.8,468.9L1616,468.8L1616.9,469.3L1615.3,471.6L1614.4,471.8L1613.6,473.4L1615.1,474.8L1615.5,473L1616.3,473L1617.7,477.4L1619.1,476.7L1618.8,475.6L1619.4,474.6L1619.5,471.8L1621.6,472.4L1622.8,470.1L1623,468.8L1624.5,466.5L1624.4,465L1628,463.1L1629.9,463.6L1629.7,461.9L1630.6,461.4L1630.4,460.4L1627.5,460L1628.4,458.8L1627.1,457.1L1625.2,458.3L1622.9,457.6L1619.7,459.3L1617.3,461.4L1615.1,461.7L1616.2,462.6L1616,464.3L1613.8,464.3L1611.4,464.1L1609.7,464.6L1607.3,463.5L1607.2,463L1607,460.8L1605.3,461.4L1605.1,462.6L1605.4,464.3L1605.1,465.4L1602.9,465.5L1599.6,464.8L1597.5,464.6L1595.9,463.2L1592.1,462.8L1588.6,461.3L1586,459.9L1583.4,458.9L1584.4,456.4L1586.2,455.1L1582.4,453.2L1579.7,451.5L1578.9,448.5L1580.9,448.9L1581,447.5L1579.9,446.1L1580.2,443.8L1577.2,440.6Z"/>
<path fill="#fed26f" d="M1617.7,477.4L1617.7,479.3L1616.7,478.9L1616.9,481.1L1616.1,479.7L1616,478.3L1615.4,477L1614.3,475.4L1611.8,475.3L1612,476.4L1611.2,477.9L1610,477.4L1609.6,477.8L1608.8,477.5L1607.8,477.3L1607.4,475.1L1606.4,473L1606.9,471.4L1605.2,470.6L1605.8,469.6L1607.5,468.6L1605.5,467.2L1606.5,465.3L1608.7,466.5L1610,466.6L1610.2,468.5L1612.8,468.9L1616,468.8L1616.9,469.3L1615.3,471.6L1614.4,471.8L1613.6,473.4L1615.1,474.8L1615.5,473L1616.3,473L1617.7,477.4Z"/>
<path fill="#fdc55e" d="M1465.5,424.7L1469.5,425.7L1472.6,425.3L1475,425.6L1478.2,424.1L1481.1,424L1483.7,425.4L1484.2,426.3L1484,427.7L1486,428.3L1487.1,429.1L1485.2,429.9L1486,433L1485.5,433.9L1487,436.1L1485.7,436.5L1484.7,435.8L1481.6,435.5L1480.4,435.9L1477.3,436.3L1475.8,436.3L1472.7,437.3L1470.4,437.3L1469,436.8L1466,437.6L1465.1,437L1464.9,438.5L1464.2,439.1L1463.5,439.7L1462.5,438.5L1463.5,437.5L1461.8,437.7L1459.5,437.1L1457.7,438.7L1453.5,439L1451.3,437.5L1448.4,437.4L1447.8,438.5L1445.9,438.9L1443.2,437.4L1440.2,437.5L1438.6,434.8L1436.6,433.2L1438,431.1L1436.2,429.8L1439.3,427.2L1443.5,427.1L1444.6,425L1449.8,425.4L1453.1,423.6L1456.3,422.8L1460.8,422.8L1465.5,424.7ZM1439,426.5L1436.8,427.9L1435.9,426.6L1435.9,426.1L1436.6,425.8L1437.4,424.1L1436.1,423.3L1438.9,422.5L1441.2,422.9L1441.6,423.9L1443.9,424.8L1443.4,425.5L1440.2,425.6L1439,426.5Z"/>
<path fill="#fee08b" d="M1462.3,448.2L1461.8,449.1L1460.8,448.7L1460.3,450.5L1461,450.9L1460.3,451.2L1460.1,451.9L1461.4,451.6L1461.5,452.6L1460.1,457L1458.3,452.3L1459.1,451.4L1458.9,451.2L1459.7,450L1460.2,447.9L1460.6,447.2L1460.7,447.2L1461.6,447.2L1461.8,446.7L1462.6,446.7L1462.6,447.8L1462.2,448.2L1462.3,448.2Z"/>
<path fill="#e0e0e0" d="M1461.8,449.1L1460.8,448.7L1460.3,450.5L1461,450.9L1460.3,451.2L1460.1,451.9L1461.4,451.6L1461.8,450.8L1461.8,449.1Z"/>
<path fill="#fed97f" d="M1643.6,520.5L1642.1,519.1L1640.5,518.8L1639,517.2L1638.5,514.8L1637.4,512.4L1635.6,512.3L1635.4,510.3L1636.3,507.9L1636.6,505.1L1637.8,503.9L1638,500.9L1640.4,500.9L1640,503L1642.3,503L1644.8,504.2L1644.1,501L1645.9,498.7L1649.4,498.1L1652,498.6L1652.8,497.3L1653,495L1650.8,492.6L1650.6,489.9L1648.5,487.7L1646.5,487.5L1645.9,488.5L1644.3,488.6L1643.5,488.1L1640.6,489.7L1640.6,487.3L1641.2,484.4L1639.4,484.3L1639.2,482.6L1638,481.8L1636.5,482.4L1634.9,483.6L1632.9,483.7L1631.7,486.7L1630.6,487.1L1631.9,489.6L1633.6,491.5L1634.7,493.3L1633.7,495.7L1632.8,496.2L1633.4,497.6L1635.3,499.8L1635.6,501.3L1635.5,502.6L1636.6,505.1L1635.1,507.6L1633.8,510.4L1633,513L1632.7,514.7L1633.2,516.2L1633.6,514.6L1635,515.9L1636.4,517.5L1636.9,518.8L1638,519.9L1638.4,519.4L1640.7,520.6L1640.9,522L1642.7,521.6L1643.6,520.5Z"/>
<path fill="#fee79b" d="M1649.5,508.9L1651.6,510.4L1650.8,512.3L1651.8,514L1655.2,511.5L1657.4,509.2L1660.6,507.5L1662.8,505.7L1663.2,500.8L1662,495.8L1660.3,493.6L1657.8,491.9L1655.3,488.4L1653.2,485.5L1656.1,481L1659.7,478.7L1656.9,478L1655.6,476.9L1656.1,475.3L1653.6,474.8L1652.3,473.8L1649.9,475.2L1647.3,475.6L1645.1,475.5L1643.6,476.2L1645.2,478.3L1646.5,480.8L1649.8,480.8L1650.9,483.2L1649.1,484L1648.4,484.9L1651.6,486.5L1653.9,489.8L1655.6,492.2L1657.7,494.1L1658.4,496L1657.9,498.7L1658.5,500.5L1658.2,503.8L1653.6,505.9L1654.8,507.6L1651.9,507.8L1649.5,508.9Z"/>
<path fill="#fee391" d="M1715.1,432.1L1717.4,435.4L1718.1,437.1L1718.1,440.3L1717.1,441.8L1714.7,442.3L1712.5,443.4L1710,443.6L1709.7,442.2L1710.2,440.1L1709,437.3L1711,436.8L1709.1,434.5L1709.3,434.2L1710.5,434.3L1711.6,433.1L1713.5,433L1714.7,432.8L1715.1,432.1ZM1709.2,446.6L1710,446.9L1711.1,446.4L1710.9,445.9L1709.5,446.2Z"/>
<path fill="#fed775" d="M1749.6,436.1L1748.5,438.3L1749,439.7L1747.6,441.6L1744.1,442.9L1739.3,443L1735.4,446.2L1733.6,445.1L1733.5,443.1L1728.7,443.7L1725.5,445L1722.3,445L1725,447L1723.2,451.7L1721.5,452.8L1720.1,451.8L1720.8,449.3L1719.1,448.5L1718,446.6L1720.5,445.8L1722,444.1L1724.7,442.7L1726.7,440.8L1732.2,440L1735.1,440.5L1737.9,435.7L1739.8,437L1743.8,434.3L1745.3,433.2L1747,429.9L1746.6,426.8L1747.7,425.1L1750.6,424.6L1752.1,428.4L1752,430.6L1749.5,433.3L1749.6,436.1ZM1757.6,417L1759.5,417.5L1761.4,416.4L1762,419.4L1758,420.2L1755.6,422.9L1751.3,421L1749.8,424L1746.8,424.1L1746.4,421.4L1747.7,419.3L1750.6,419.1L1751.4,415.3L1752.3,413.2L1755.4,416L1757.6,417ZM1732.3,444.3L1732.6,445.2L1731.1,446.9L1729.9,446L1728.5,446.7L1727.8,448.3L1726,447.5L1726.1,446.2L1727.6,444.6L1729.1,444.9L1730.2,443.7L1732.3,444.3Z"/>
<path fill="#e0e0e0" d="M1695.9,487L1697.6,487.8L1698.4,487.1L1698.7,487.8L1698.2,488.9L1699.2,490.9L1698.4,493.1L1696.8,494L1696.4,496.2L1697,498.4L1698.5,498.7L1699.7,498.4L1703.1,499.9L1702.8,501.4L1703.7,502L1703.4,503.3L1701.3,501.9L1700.3,500.5L1699.6,501.5L1697.8,499.9L1695.4,500.3L1694,499.7L1694.2,498.6L1695,497.8L1694.2,497.2L1693.8,498.2L1692.5,496.6L1692.1,495.4L1692,492.9L1693.1,493.8L1693.4,489.5L1694.3,487L1695.9,487ZM1709.7,514.5L1710,516.4L1710.1,517.9L1709.2,520.4L1708.2,517.6L1706.9,519L1707.8,521L1707,522.3L1703.8,520.7L1703.1,518.7L1703.9,517.4L1702.2,516.1L1701.3,517.3L1700,517.1L1698,518.7L1697.5,517.9L1698.6,515.6L1700.3,514.8L1701.8,513.8L1702.8,515L1704.9,514.3L1705.3,513L1707.2,513L1707.1,510.9L1709.3,512.1L1709.5,513.5L1709.7,514.5ZM1691,506.5L1691.5,508.7L1689.7,510.2L1688.2,512.1L1684.6,514.7L1685.9,512.7L1687.9,511.1L1689.5,509.2L1691,506.5ZM1707.3,504.3L1708.1,507.3L1706,506.6L1706,507.5L1706.7,509.2L1705.4,509.9L1705.3,507.9L1704.5,507.8L1704,506.1L1705.6,506.3L1705.6,505.3L1704,503.2L1706.6,503.3L1707.3,504.3ZM1703.2,509.4L1702.2,510.3L1701.3,512.1L1700.5,512.9L1698.8,511L1699.4,510.3L1700.1,509.5L1700.4,507.8L1701.9,507.6L1701.4,509.5L1703.4,506.9L1703.2,509.4ZM1700.8,505.9L1700.8,507L1699.5,508.2L1697.8,509L1697.7,507.7L1697.9,506.3L1697.4,505.1L1699.1,505.9L1700.8,505.9ZM1696.5,501.8L1695.7,504.2L1694.6,502.8L1693.2,500.7L1695.5,500.8L1696.5,501.8Z"/>
<path fill="#e0e0e0" d="M1624.9,522.5L1630.8,523.2L1633.3,525.8L1635.4,527.7L1636.9,528.8L1639.5,531.8L1642.3,531.8L1644.5,533.7L1646.1,536L1648.2,537.2L1647.1,539.4L1648.7,540.4L1649.6,540.4L1650.1,542.4L1651.1,543.9L1653.1,544.1L1654.4,545.9L1653.7,549.3L1653.6,553.5L1650.6,553.5L1648.3,551.3L1644.8,549L1643.6,547.4L1641.5,545.1L1640.2,543.1L1638.1,539.3L1635.7,537L1634.9,534.7L1633.9,532.5L1631.4,530.8L1630,528.5L1628,526.9L1625.1,523.9L1624.9,522.5ZM1661.2,556L1666.5,556.3L1667.1,555.2L1672.1,556.5L1673.1,558.2L1677.2,558.7L1680.6,560.3L1677.5,561.4L1674.5,560.3L1672,560.4L1669.2,560.2L1666.6,559.7L1663.5,558.6L1661.4,558.3L1660.3,558.7L1655.3,557.6L1654.9,556.4L1652.4,556.2L1654.2,553.6L1657.6,553.7L1659.7,554.8L1660.9,555L1661.2,556ZM1686.5,526.2L1685,528.7L1687,531.3L1686.5,532.5L1689.5,535L1686.3,535.4L1685.4,537.2L1685.5,539.7L1682.9,541.6L1682.8,544.3L1681.8,548.4L1681.4,547.5L1678.3,548.7L1677.2,547.1L1675.3,546.9L1673.9,546L1670.7,547L1669.6,545.7L1667.9,545.8L1665.6,545.5L1665.2,541.8L1663.8,541.1L1662.5,538.8L1662.1,536.4L1662.5,533.8L1664.1,532L1666.1,533L1668.2,532.5L1668.7,530.1L1669.9,529.6L1673.2,529L1675.1,526.9L1676.5,525.1L1677.6,524.1L1679.9,522.6L1682,520.7L1683.4,518.6L1684.5,518.6L1685.9,520L1686,521.2L1687.8,521.9L1690.1,522.7L1689.9,523.8L1688,523.9L1688.5,525.3L1686.5,526.2ZM1706.6,533.6L1704.4,536.3L1702.4,536.8L1699.7,536.3L1695.2,536.5L1692.8,536.8L1692.4,538.9L1694.9,541.3L1696.3,540.1L1701.4,539.2L1701.2,540.4L1700,540L1698.8,541.6L1696.4,542.7L1699,546.2L1698.5,547.1L1701,550.3L1700.9,552.1L1699.5,552.9L1698.4,551.9L1699.7,549.7L1697,550.7L1696.4,550L1696.7,548.9L1694.8,547.3L1694.9,544.7L1693.1,545.5L1693.4,548.7L1693.5,552.6L1691.8,553L1690.6,552.2L1691.3,549.7L1690.9,547L1689.8,547L1688.9,545.1L1690.1,543.4L1690.4,541.2L1691.8,537.1L1692.4,535.9L1694.7,533.9L1696.9,534.7L1700.3,535.1L1703.4,535L1706.1,533L1706.6,533.6ZM1730.9,540.6L1731.7,545.1L1734.5,546.7L1736.8,543.8L1739.9,542.1L1742.3,542.1L1744.6,543.1L1746.7,544.1L1749.6,544.6L1754.4,546.5L1759.4,548L1761.3,549.4L1762.8,550.8L1763.2,552.4L1767.8,554.1L1768.4,555.5L1765.9,555.8L1766.5,557.7L1768.9,559.4L1770.7,562.3L1772.3,562.3L1772.2,563.5L1774.3,563.9L1773.5,564.4L1776.4,565.6L1776.1,566.4L1774.3,566.6L1773.6,565.9L1771.2,565.6L1768.5,565.1L1766.4,563.4L1764.8,561.9L1763.4,559.5L1759.8,558.3L1757.5,559.1L1755.9,560L1756.2,562L1754.1,563L1752.5,562.5L1749.7,562.4L1747.3,560.2L1744.5,559.6L1743.8,560.4L1740.4,560.5L1741.5,558.2L1743.3,557.5L1742.5,554.5L1741.2,552.2L1735.9,549.9L1733.7,549.7L1729.6,547.2L1728.8,548.5L1727.7,548.7L1727.1,547.7L1727.1,546.5L1725,545.2L1728,544.2L1729.9,544.3L1729.7,543.5L1725.7,543.5L1724.6,541.9L1722.2,541.4L1721,540.1L1724.7,539.4L1726.1,538.5L1730.5,539.6L1730.9,540.6ZM1705.9,561.8L1706.2,561.1L1708.5,560.5L1710.4,560.4L1711.3,560.1L1712.3,560.4L1711.3,561.2L1708.5,562.4L1706.2,563.1L1704.4,565.2L1702.1,565.8L1701.7,565.4L1702,564.5L1703.2,562.9L1705.9,561.8ZM1686.6,559.6L1687.6,560.3L1689.2,560.1L1689.9,561.3L1686.8,561.8L1684.9,562.2L1683.4,562.1L1684.3,560.6L1685.8,560.6L1686.6,559.6ZM1700.2,559.6L1699.8,561.1L1695.7,561.9L1692.1,561.5L1692.1,560.5L1694.3,560L1696,560.8L1697.8,560.6L1700.2,559.6ZM1689.5,563.6L1692,563L1693.5,563.9L1694.4,564.7L1694.3,565.4L1693.1,565.5L1689.5,563.6ZM1716,534.4L1715.9,536.8L1714.5,536.5L1714.1,538.2L1715.2,539.6L1714.4,540L1713.3,538.2L1712.5,534.7L1713,532.6L1713.9,531.6L1714.1,533.1L1715.7,533.3L1716,534.4ZM1720.9,545.9L1721.9,548L1719.6,546.9L1717.3,546.7L1715.7,546.9L1713.9,546.8L1714.5,545.3L1717.9,545.1L1720.9,545.9ZM1711.4,546L1712.1,546.9L1711,547.8L1709.2,547.4L1708.6,546.2L1711.4,546Z"/>
<path fill="#e0e0e0" d="M1780,548.8L1780.6,549.3L1780.5,550.8L1779.6,552.5L1778.2,552.7L1777.7,553.4L1776.2,554.1L1774.8,554.7L1773.4,554.7L1771.1,554L1769.6,553.2L1769.8,552.3L1772.3,552.7L1773.8,552.5L1774.6,551.1L1774.8,552.6L1776.4,552.4L1777.1,551.4L1778.7,550.5L1778.4,548.9L1780,548.8ZM1782.7,549.8L1781.9,550.5L1781.4,548.9L1780.7,547.8L1779.5,546.9L1777.9,545.8L1776,545L1776.7,544.3L1778.2,545.1L1779.1,545.7L1780.3,546.3L1781.4,547.5L1782.4,548.4L1782.7,549.8ZM1787.2,552.1L1788,552.7L1789.3,554.4L1790.6,555.3L1790.2,556.1L1789.5,556.4L1788.3,555.3L1787.1,553.6L1786.5,551.5L1786.9,551.3L1787.2,552.1ZM1800.5,559.4L1801.1,560.3L1801.2,560.8L1799.1,559.6L1797.6,558.6L1796.6,557.7L1797,557.5L1798.2,558.1L1800.5,559.4ZM1803.8,564.4L1802.7,564.5L1801.1,564.2L1800.5,563.8L1800.6,562.7L1802.4,563.2L1803.3,563.7L1803.8,564.4ZM1806,563.7L1805.6,564.2L1803.6,561.8L1803,560.2L1804,560.2L1805,562.4L1806,563.7ZM1807.2,566.1L1808,567.1L1806.1,567L1805.1,565.3L1806.7,566L1807.2,566.1ZM1794.7,557.6L1794.2,557.7L1793,557.1L1791.9,556L1792,555.5L1793.7,556.7L1794.7,557.6ZM1820.9,578.2L1821.3,580.5L1820.6,580.1L1820,580.3L1819.6,579.5L1819.6,577.4L1820.9,578.2ZM1822.9,582.4L1822,582.8L1821.1,581.6L1821.2,580.9L1822.9,582.4ZM1817.2,595L1819.5,596.7L1820.9,598L1819.9,598.6L1818.4,597.9L1816.4,596.7L1814.6,595.2L1812.8,593.3L1812.5,592.4L1813.6,592.4L1815.2,593.3L1816.4,594.3L1817.2,595ZM1847.6,646.9L1846.5,648.3L1845.2,650.2L1843,651.3L1842.6,650.6L1841.4,650.2L1843,647.9L1842.1,646.4L1839.2,645.3L1839.3,644.3L1841.2,643.4L1841.7,641.3L1841.6,639.5L1840.5,637.7L1840.5,637.2L1839.2,636.1L1837.1,633.7L1836,631.7L1837,631.5L1838.4,633L1840.6,633.8L1841.3,636.2L1843.3,639L1843.4,637.2L1844.6,637.9L1845,640L1847.2,640.9L1849.1,641.1L1850.6,640.1L1852,640.4L1851.3,642.8L1850.5,644.4L1848.4,644.3L1847.7,645.2L1847.9,646.3L1847.6,646.9ZM1827.8,656.4L1830.2,654.9L1831.8,653.5L1833,651.5L1834.1,650.8L1834.5,649.3L1836.4,648L1837,649.2L1837.6,650.3L1839.6,649.2L1840.3,650.3L1840.3,651.5L1839.3,652.7L1837.5,654.8L1836.1,655.9L1837.2,657.2L1835.1,657.2L1832.7,658.2L1832,660L1830.4,662.8L1828.3,664L1826.9,664.8L1824.4,664.7L1822.6,663.8L1819.7,663.6L1819.2,662.6L1820.7,660.6L1824.1,657.9L1825.9,657.4L1827.8,656.4Z"/>
<path fill="#fee79b" d="M1756.6,575.1L1757.6,577.2L1759.3,576.2L1760.2,577.3L1761.5,578.4L1761.3,579.6L1761.9,582L1762.3,583.3L1763,583.6L1763.7,586L1763.4,587.4L1764.3,589.2L1767.3,590.7L1769.2,592L1771,593.1L1770.7,593.8L1772.2,595.5L1773.3,598.5L1774.4,597.9L1775.5,599.1L1776.2,598.6L1776.6,601.5L1778.6,603.2L1779.8,604.3L1782,606.5L1782.7,608.6L1782.8,610.2L1782.6,611.9L1783.9,614.2L1783.7,616.6L1783.3,617.9L1782.5,620.3L1782.6,621.9L1782.1,623.8L1780.9,626.3L1778.8,627.7L1777.8,629.8L1776.9,631.1L1776.1,633.5L1775.1,634.8L1774.4,636.9L1774,638.8L1774.2,639.6L1772.6,640.6L1769.5,640.7L1767,641.8L1765.8,642.9L1764.1,644L1761.9,642.8L1760.2,642.3L1760.6,640.9L1759.1,641.4L1756.7,643.4L1754.4,642.7L1752.8,642.2L1751.3,642L1748.6,641.3L1746.9,639.6L1746.4,637.5L1745.7,635L1744.4,635L1741.7,634.7L1742.7,633.4L1742,631.3L1740.7,633.2L1738.2,633.7L1739.6,632.2L1740.1,630.6L1741.1,629.3L1740.9,627.3L1738.7,629.6L1737,630.5L1735.9,632.7L1733.8,631.6L1733.9,630.1L1732.2,628.2L1730.8,627.1L1731.2,626.5L1727.8,624.9L1725.8,624.8L1723.2,623.5L1718.3,623.7L1714.8,624.7L1711.7,625.6L1709.1,625.4L1706.2,626.8L1703.8,627.4L1703.3,628.9L1702.3,630L1700,630L1698.2,630.3L1695.8,629.8L1693.9,630.1L1692,630.2L1690.4,631.7L1689.6,631.5L1688.2,632.3L1686.9,633.2L1684.9,633.1L1683.1,633.1L1680.2,631.4L1678.7,630.8L1678.8,629.2L1680.2,628.9L1680.6,628.3L1680.5,627.3L1680.8,625.4L1680.5,623.8L1679.1,621L1678.6,619.5L1678.8,617.9L1677.7,616.1L1677.6,615.3L1676.4,614.2L1676.1,612.1L1674.5,609.9L1674.1,608.8L1675.3,610L1674.4,607.4L1675.8,608.2L1676.6,609.3L1676.5,607.9L1675.2,605.7L1674.9,604.9L1674.3,604L1674.6,602.5L1675.1,601.8L1675.5,600.4L1675.2,598.8L1676.3,596.9L1676.6,599L1677.7,597.1L1679.9,596.2L1681.2,595L1683.3,594L1684.6,593.8L1685.3,594.1L1687.5,593.1L1689.1,592.8L1689.5,592.2L1690.3,591.9L1691.8,592L1694.6,591.2L1696.1,590L1696.8,588.6L1698.4,587.2L1698.5,586.1L1698.6,584.6L1700.5,582.3L1701.7,584.6L1702.8,584.1L1701.9,582.8L1702.7,581.5L1703.9,582.1L1704.3,580L1705.8,578.7L1706.4,577.6L1707.8,577.1L1707.8,576.3L1709,576.7L1709.1,576L1710.3,575.6L1711.6,575.2L1713.6,576.5L1715.1,578.1L1716.8,578.1L1718.6,578.4L1718,576.9L1719.3,574.7L1720.5,574L1720.1,573.3L1721.3,571.7L1722.9,570.7L1724.3,571.1L1726.6,570.5L1726.6,569.2L1724.6,568.3L1726,567.9L1727.8,568.6L1729.3,569.7L1731.6,570.4L1732.4,570.1L1734.1,570.9L1735.6,570.1L1736.7,570.4L1737.3,569.9L1738.6,571.2L1737.8,572.7L1736.8,573.8L1735.9,573.9L1736.2,574.9L1735.4,576.3L1734.4,577.7L1734.6,578.4L1736.8,579.9L1738.9,580.8L1740.3,581.8L1742.2,583.4L1743,583.4L1744.5,584.1L1744.9,584.9L1747.5,585.8L1749.3,584.9L1749.8,583.4L1750.3,582.2L1750.7,580.7L1751.5,578.5L1751.1,577.2L1751.4,576.4L1751,574.9L1751.4,572.8L1751.9,572.3L1751.5,571.4L1752.1,569.9L1752.7,568.4L1752.7,567.6L1753.8,566.6L1754.5,568L1754.7,569.6L1755.4,570L1755.5,571.1L1756.5,572.5L1756.7,574.1L1756.6,575.1ZM1761.6,648.8L1764.2,649.8L1765.7,649.4L1767.9,648.9L1769.5,649.1L1769.7,652.3L1768.8,653.2L1768.5,655.4L1767.5,654.7L1765.6,656.6L1765.1,656.4L1763.4,656.3L1761.7,654L1761.3,652.2L1759.8,649.8L1759.8,648.6L1761.6,648.8Z"/>
</g>
<path fill="none" stroke="#fff" stroke-width="1.3" stroke-linejoin="round" d="M1113.2,497.9L1113.2,495.7L1114.6,493.6L1117.8,493.6L1118.1,492.7L1115.4,490.6L1116.5,490.4L1116.5,488.9L1121.7,488.9L1121.5,491.1L1121.4,494.1L1122.2,494.1L1123,494.7M1121.7,488.9L1123.8,487M1118.9,500.1L1120,499L1121,498.2L1121.5,497.4L1124.1,494.7M1121,498.2L1123.3,499.3L1125.2,500.9M1126,502.3L1128.2,501.2L1129.9,499.3L1132.6,497.9L1134.5,497.4L1137.8,496.8M1130.9,507.2L1133.1,507.6L1135,508L1136.4,507.8M1138.6,515.4L1138.6,512.7L1139.5,511.4M1169.2,483.7L1169.4,485.1L1168.5,486.7L1169.2,488.4M1426.9,389.2L1428.2,389.5L1428.9,390.4L1429,391.6L1429.8,392.6L1429.8,393.7L1428.1,394.3L1429,395.5L1429,396.7L1430.4,399.1L1430.1,399.9L1428.8,400.2L1426.3,402.5L1427,403.7L1426.4,403.5M1405.8,398L1407.1,398.9L1409.1,399.1L1409,399.9L1410.4,400.4L1410.9,399.8L1412.7,400.1L1413,400.9L1415,401.1L1416.3,402.4M1426.9,387.8L1425.7,387.4M1422.3,384.6L1425.4,383.7L1430,383.9L1432.7,383.7L1433,384.2L1434.5,384.4L1437.1,385.7L1437.4,386.9L1435.1,387.8L1434.5,389.4L1431.5,390.4L1428.9,390.4M1437.1,385.7L1438.8,385.3L1441.7,384.2M1431.2,379.8L1433.5,379.3L1434.7,379.6L1437,380.6L1439.3,380.7M1429,396.7L1431.8,395.9L1433.9,395.8L1436.7,396.1L1439.7,396.7L1441.9,396.8L1442.9,397.1L1443.9,396.7L1444.6,397.3L1447.1,397.2L1448.2,397.4L1448.4,396.1L1449.2,395.5L1451.6,395.3M1401.9,404.1L1404,405L1405.5,403.9L1406.4,403.7L1408.6,404.5L1409.8,404.4L1411.1,404.9M1411.2,406.2L1410.9,407.3L1409.4,407.3L1409.9,407.9L1409,409.6M1410,410.6L1410.9,410.9L1412.9,412.1L1415.2,412.6L1416.2,412.2L1416.9,413.3L1417.7,414L1416.7,415.1M1416.2,412.2L1418.3,411.5L1420,411.6M1425.1,405.4L1426.6,406.1L1426.8,406.8M1426.4,403.5L1425.6,404.2M1437.5,405.9L1439.9,405.2L1441.9,406.1L1443.1,406.2L1444.3,406.9L1444.1,407.8L1445.1,408.3L1445.5,409.4L1446.4,410.1L1446.3,410.5L1446.7,410.8L1446,411L1444.4,410.9L1444.2,410.5L1443.6,410.8L1443.8,411.3L1443,412.1L1442.6,413.1L1441.9,413.4M1402.3,413.3L1404.1,413.4M1407.8,415.2L1409.1,416.5L1409.7,417.3L1411,418.3L1412,418.9L1413,420.1L1415.5,421.1L1415.2,421.6M1407.8,415.2L1408.4,414.1L1409.4,414.7L1409.9,414.1L1411.2,414.1L1413.6,414.5L1415.4,414.5L1416.7,415.1M1416.7,415.1L1417.7,415.1L1417,416.3L1418.3,417.3L1417.9,418.6L1417.3,418.7L1415.9,419.6L1415.5,421.1M1417.3,418.7L1418,419.2L1418.4,419.6L1419.3,419.9L1420.3,420.4L1420.1,420.7L1419.6,421.3L1418.9,421.5L1418.7,421L1417.5,422.3L1417.7,423.2M1419.6,421.3L1420.2,422L1420.8,422.3L1421,423.3L1420.7,424.2L1421.1,425.4L1422.2,426L1422.1,426.8L1421.2,427.2L1421.1,428L1419.8,429.4M1422.2,426L1424,425.8L1425,425.2L1426.5,425.3L1426.9,424.8L1427.5,424.7M1421,423.3L1423.1,422.3L1423.7,422.2L1424.6,422.1L1425.9,422L1427.3,422.9L1427.5,424.7L1429.5,424.8L1431.7,424L1433.6,425L1436.1,424.7L1436.1,423.3L1436.8,423.7M1425.9,422L1426.4,421.6L1426.1,421.3L1426.5,420.4L1427.6,419.6L1426.2,418.4L1426,417.4L1426.7,416.8M1421.8,413.5L1420,411.6M1398,408.9L1398.6,409.9M1358.9,441.5L1359.9,443.3L1360.1,444.9L1361,447.8L1361.8,448.4L1361.2,449.5L1357.7,449.9L1356.4,450.9L1354.9,451.2L1354.7,453.2L1351.6,454.3L1350.5,455.6L1348.3,456.4L1345.6,456.8L1341.2,458.8L1341.2,462L1341.2,462.7L1341.1,466.9L1332.2,466.7L1332.2,473.7L1329.7,474L1329,475.4L1329.5,479.3L1318.8,479.3L1318.3,480.2M1341.2,462L1329,462.1M1341.2,462.7L1351.4,469.4L1360.6,475.3L1369.8,481.3L1370.4,482.5L1372.1,483.3L1373.4,483.8L1373.4,485.5L1376.5,485.2L1380.3,484L1388.2,478.6L1397.6,473.5L1396.4,471.7L1394.2,470.5L1392.9,471L1392,469.4L1391.9,468.3L1390.3,466.3L1391.3,465.2L1391.1,463.4L1391.5,461.9L1391.2,460.7L1391.7,458.5L1391.6,457.2L1390.7,454.8L1392,454.2L1392.3,453L1393.9,450.8L1394.7,450L1396,449.2L1396.2,447.1M1390.7,454.8L1389.5,449.9L1387.9,448.8L1387.8,448.1L1385.6,446.5L1385.3,444.4L1387,442.9L1387.7,440.7L1387.3,438.1L1387.8,436.7M1397.6,473.5L1401.9,474.6L1403.4,476.1L1405.3,475.1L1408.1,473.6L1419,478.8L1429.9,484.1L1429.9,482.9L1433,482.9L1433,477.5M1351.4,469.4L1347.2,469.4L1348.5,481.2L1349.8,492.9L1350.3,493.3L1349.7,495.2L1338.8,495.2L1338.3,495.9L1337.3,495.7L1335.8,496.2L1333.8,495.4L1333,495.5L1332.5,497.1L1331.6,497.6L1329.8,495.7L1328.1,493.7L1326.3,493L1325,492.2L1323.5,492.2L1322.2,492.8L1320.8,492.6L1319.9,493.5M1376.5,485.2L1376.5,491.5L1375,493.3L1374.8,495L1372.3,495.4L1368.6,495.7L1367.6,496.6L1365.8,496.8L1365.6,498.1L1366,499.3L1367.5,501.1L1367.6,502.4L1370.8,503L1370.7,504.9L1371.6,504.1L1372.6,504.1L1374.7,505.7M1365.8,496.8L1364.1,496.8L1363.4,496.2L1361.9,496.6L1359.4,497.8L1358.8,498.6L1356.7,499.8L1356.4,500.5L1355.2,501.1L1353.9,500.7L1353.1,501.4L1352.7,503.3L1350.6,505.5L1350.6,506.4L1349.9,507.6L1350.1,509.2L1348.9,509.6L1348.3,509.9L1347.9,508.8L1347.1,509.1L1346.6,509L1346.1,509.8L1344,509.8L1343.3,509.4L1342.9,509.6L1342.1,508.9L1342.2,508.1L1341.9,507.7L1341.3,508L1341.4,507.1L1342,506.4L1340.8,505.3L1340.5,504.5L1339.9,503.9L1339.4,503.9L1338.7,504.2L1337.8,504.6L1337.1,505.2L1335.9,505L1335.2,504.3L1334.7,504.2L1334,504.5L1333.5,504.5L1333.4,503.6L1333.5,502.7L1333.3,501.6L1332.3,500.9L1331.7,499.3L1331.6,497.6M1333.4,503.6L1333,503.7L1331.5,503.5L1331.3,503.8L1330.7,503.9L1328.7,503.2L1327.4,503.1L1322.4,503L1319.3,503.7M1327.4,503.1L1327.4,504.1L1327.1,504.4L1327.3,505.3L1326.9,505.6L1326.3,505.6L1325.6,506.1L1324.7,506L1323.5,507.4M1319.2,500.4L1322.2,500.3L1322.8,499.7L1323.7,499.6L1324.7,500.3L1325.6,500.3L1326.5,499.9L1327.1,500.6L1325.8,501.3L1324.7,501.2L1323.5,500.6L1322.5,501.3L1322,501.3L1321.3,501.7L1318.9,501.6M1328.7,513.2L1330.1,512L1330.4,511.2L1330.9,510.6L1331.7,510.6L1332.3,510.1L1334.5,510.1L1335.2,511.1L1335.8,512.2L1335.8,513L1336.2,513.7L1336.1,514.7L1336.9,514.5L1335.6,515.8L1334.4,517.3L1334.3,518.1L1333.6,519M1336.9,514.5L1337.5,514.5L1338.2,514.2L1339.3,515.9L1339.2,517L1339.7,517.6L1340.5,517.6L1341,516.5L1341.8,516.5L1341.7,517.3L1341.9,518.6L1341.4,519.8L1342.1,520.6L1343,520.8L1344.2,521.9L1344.2,523L1344,523.3L1343.8,525.6M1341.8,516.5L1342.2,516.5L1342.4,515.3L1342.2,514.8L1342.4,514.4L1343.5,514.1L1342.8,511.9L1342.1,510.8L1342.4,509.9L1342.9,509.6M1357,523.9L1356,520.4L1356.7,517.4L1357.8,515.1L1357.1,511.2L1356.7,509.1L1356.8,507.6L1361.5,507.5L1362.7,507.6L1363.6,507.2L1364.9,507.4L1364.7,508.3L1365.8,509.7L1365.8,511.7L1366.1,513.8L1366.8,514.8L1366.2,517.3L1366.4,518.6L1367.1,520.4L1367.7,521.3M1350.1,509.2L1351.3,509.8L1351.8,510.7L1353,511.3L1354,510.6L1355.2,510.5L1357.1,511.2M1364.9,507.4L1367.3,507.5L1368.2,507.2L1368.8,506L1370.1,505.7L1370.7,504.9M1367.3,507.5L1366.9,508.9L1368.7,510.7L1368.8,512L1369.4,512.6L1369.2,518.9L1369.9,520.7M1401.2,500.5L1401.8,498.3L1402.9,494.7L1406.4,492.1L1406.6,488.6L1407.6,483L1408.2,481.9L1407.1,480.9L1407,480.1L1406,479.3L1405.3,475.1M1403.5,503.4L1404.4,502.4L1405.5,504.2L1405.6,506L1405.5,507.8L1407,510.3L1405.5,510.2L1404.7,510.4L1403.5,510.2L1402.9,511.4L1404.5,513L1405.7,513.5L1406.1,514.6L1407,516.5L1406.5,517.3L1408.8,517L1409.3,516.4L1409.7,516.4L1410.4,517L1413.8,516L1415,514.9L1416.4,513.9L1416.2,513L1416.9,512.7L1419.6,512.9L1422.1,511.6L1424.1,508.7L1425.5,507.6L1427.2,507.1L1427.3,506.4L1426.2,505.6L1426.2,504L1425.6,503L1424.7,503.1L1425,502.1L1425.7,501L1425.3,499.9L1426.2,499L1425.7,498.4L1426.4,496.7L1427.6,494.7L1430,494.9L1429.9,484.1M1406.5,517.3L1405.2,520L1404.5,520.5L1404.3,522.6L1404.6,523.8L1404.3,524.6L1405.6,526L1405.9,527L1406.9,528.4L1408.1,529.3L1408.2,530.5L1408.5,531.3L1408.3,532.8L1406.2,532.2L1404,531.4L1400.5,531.3L1400.2,531.2L1398.6,531.5L1396.9,531.1L1395.6,531.3L1391.2,531.3M1395.6,531.3L1395.6,534.6L1391.6,534.6L1390.7,534.7M1400.5,531.3L1400.3,532.5L1401.1,533.9L1403.1,533.7L1403.8,534.2L1402.6,537.4L1403.9,539L1404.2,541.1L1403.8,543L1403,544.2L1400.6,544.1L1399.2,542.8L1398.9,544L1397.1,544.3L1396.1,545.1L1397.2,546.9L1395.1,548.4M1408.5,531.3L1410,528.8L1411.6,527.3L1413.4,527.8L1415.2,527.9L1415.4,526L1416.5,524.6L1418,523.8L1420.2,524.7L1421.9,525.7L1423.9,526L1426,526.5L1426.8,524.9L1427.2,524.6L1428.4,524.9L1431.4,523.6L1432.5,524.1L1433.4,524L1433.8,523.4L1434.8,523.1L1436.9,523.4L1438.6,523.5L1439.5,523.2M1415.2,527.9L1415,529.6L1414.2,531L1413.7,532.8L1413.3,535.2L1413.5,536.7L1413,537.7L1413,538.6L1412.6,539.5L1410.9,540.9L1409.6,542.2L1408.4,544.9L1408.5,547.2L1407.8,548L1406.2,549.3L1404.6,551.1L1403.6,550.6L1403.4,549.8L1401.9,549.8L1401,550.8L1400.3,550.5L1399.3,549.6L1398.4,550.1L1397.3,551.3M1398.4,554.1L1399.6,553.8L1400.4,553.8L1401.3,553.5L1409.4,553.5L1410,555.6L1410.8,557.2L1411.5,558.1L1412.5,559.5L1414.3,559.3L1415.2,558.9L1416.7,559.3L1417.1,558.6L1417.8,557L1419.5,556.9L1419.6,556.4L1421,556.4L1420.8,557.4L1424.1,557.4L1424.2,559.1L1424.7,560.2L1424.3,561.8L1424.5,563.5L1425.4,564.5L1425.3,567.7L1425.9,567.5L1427.2,567.6L1428.8,567.2L1430.1,567.3L1430.4,568.2L1430,569.5L1430.5,570.8L1430.1,571.8L1430.4,572.7L1424.7,572.7L1424.6,581.4L1426.4,583.6L1428.2,585.3L1423.2,586.4L1416.6,586L1414.7,584.7L1403.6,584.8L1403.2,585L1401.6,583.8L1399.8,583.7L1398.2,584.2L1396.8,584.7M1428.2,585.3L1430.4,584.7L1432.2,584.8L1433.3,585.5L1433.3,585.7L1431.7,586.3L1430.9,586.3L1429.2,587.4L1428.1,586.3L1423.9,587.2L1421.9,587.3L1421.8,597L1419.1,597.1L1419.1,605.1L1419.1,615.2L1416.7,616.6L1415.2,616.8L1413.5,616.3L1412.3,616L1411.8,614.9L1410.7,614.1L1409.4,615.5M1419.1,605.1L1419.9,605.5L1421.5,608.1L1421.2,609.8L1421.8,610.7L1423.8,610.4L1425.2,609.2L1426.4,608.4L1427.1,607.1L1428.4,606.5L1429.6,606.8L1430.9,607.6L1433.1,607.7L1434.8,607.1L1435.1,606.2L1435.6,604.9L1437.1,604.7L1437.9,603.7L1438.8,601.8L1441.3,599.8L1445.1,597.8L1441.3,596.1L1440.5,594.4L1440.5,593.4L1439.3,593.1L1436.2,590.1L1435.4,588.6L1434.8,588.1L1433.8,585.9L1433.3,585.7M1445.1,597.8L1446.3,597.8L1447.6,598.3L1448.5,597.9L1449.9,598.2L1451.2,602.1L1452,604L1451.5,607L1451.7,608L1450.3,607.5L1449.5,607.7L1449.3,608.5L1448.5,609.5L1448.6,610.5L1450.2,612L1451.8,611.7L1452.3,610.4L1454.4,610.5M1451.7,608L1452.3,610.4M1449.9,598.2L1452.8,595.1L1453.5,593.2L1453.9,592.9L1454.2,591.3L1453.8,590.5L1453.9,588.5L1454.5,586.6L1454.5,583.1L1453,582.2L1451.7,582L1451.2,581.4L1449.9,580.8L1447.6,580.8L1447.4,579.8L1445.4,580.2L1443.8,581.3L1443.5,582.2L1442.5,582.4L1440.1,584.7L1438.6,586.5L1437.7,586.5L1436.8,586.2L1433.8,585.9M1430.1,567.3L1431,567.4L1431.2,568.2L1432.4,568.2L1434.2,568.4L1435.1,569.6L1437.3,570L1438.9,569.2L1439.6,570.6L1441.7,571L1442.7,572.2L1443.8,573.7L1445.9,573.7L1445.7,570.7L1444.9,571.2L1443,570.2L1442.2,569.7L1442.6,566.9L1443.1,563.7L1442.5,562.5L1443.2,560.8L1444,560.5L1447.6,560L1448.7,560.3L1449.9,560.9L1450.9,561.4L1452.7,561.9L1454.2,562.7L1455.5,563.9L1456.2,566.2L1455.8,567L1455.2,569.2L1455.7,571.4L1454.8,572.4L1454,574.9L1455.5,575.6L1447.2,577.9L1447.4,579.8M1455.5,575.6L1457,576.9L1457.8,576.7L1458.9,577.4L1459,578.5L1458.5,579.7L1458.6,581.7L1460.4,583.3L1461.3,581.5L1462.4,580.9L1462.2,577.4L1461.1,575.4L1460.1,574.5L1459.1,574.6L1458.4,571L1459.1,568.9L1461.2,568.7L1464.5,569.5L1465.2,569.1L1467.1,569.1L1468.1,568.3L1469.7,568.3L1472.7,567.2L1474.9,565.7M1459.1,568.9L1458.4,565.2L1457.4,563.9L1456.9,563.2L1454.2,562.7M1448.7,560.3L1447.2,556.8L1445.7,555.3L1445.1,553.7L1445.4,552.3L1444.9,549.8L1444.7,546.5L1444,545.3L1444.3,543.7L1444.6,543.6L1444.8,541.9L1445.5,541.2L1445.6,539.1L1446.2,538.1L1446.4,535.9L1446.9,534.6L1448,533.2L1449,532.5L1449.9,531.5L1448.8,531.1L1449,527.9L1446.6,526.1L1445.9,524.9L1444.4,525.5L1443.1,525.3L1442.4,525.8L1441.2,525.5L1439.5,523.2M1471.8,550.3L1467.9,547.5L1467.7,546L1457.8,540.4L1457.3,540.1L1457.3,537.2L1458.1,536.1L1459.4,534.3L1460.4,532.3L1459.2,529.2L1458.9,527.8L1457.6,525.9M1457.3,540.1L1451.8,540.3L1448.8,540.3L1447.8,540.6L1448.9,542.1L1448.8,543.7L1448,544.1L1448.1,545.2L1448.7,545.8L1448.7,546.7L1448.1,547.2L1447,548.7L1446,549.6L1444.9,549.8M1447.8,540.6L1446.2,541.4L1445.5,541.2M1448,544.1L1446.5,543.9L1445.7,545.5L1444,545.3M1478.3,542.1L1476.7,539.8L1476.7,529.9L1479.1,526.8L1477.2,526.8L1476.1,525.9L1473.6,527L1472.8,528.2L1471,527.9L1470.4,527.6L1469.7,527.7L1468.8,527.7L1465.4,525.4L1463.5,525.4L1462.6,524.5L1462.6,522.9L1461.2,522.5L1459.3,524.3L1457.6,525.9L1455.9,527.2L1454,527.2L1451.8,527.8L1450.1,527.2L1449,527.9M1479.1,526.8L1479.8,526L1481.5,525.9L1484,524L1487.5,523.9L1495.2,515.7L1492.9,515.7L1484,512.4L1483,511.5L1482,510.2L1481,508.7L1481.6,507.7L1480.9,507.2L1480.3,507.4L1478.8,507.3L1478.7,506.5L1478.5,505.8L1480.4,503.3L1479.5,502.4L1478.3,500.8L1477.1,499.9L1476.4,499L1474.1,497.9L1472.2,497.8L1471.5,497.3L1469.9,497.9L1468.3,496.7L1467.4,498.7L1464.2,498.1L1463.9,497.1L1465.1,493L1465.4,491.2L1466.3,490.4L1468.2,489.9L1469.6,488.4M1481.6,507.7L1482.6,506.2M1480.4,503.3L1482.4,502.8M1495.2,515.7L1497.1,513.4L1498.4,511.7L1498.4,507.5L1498.4,506.4M1464.2,498.1L1463.8,500.5L1462.7,503.2L1461,504.5L1459.9,506.6L1459.6,507.7L1458.3,508.5L1457.5,511.4L1457.6,513.8L1457.1,514.6L1455.7,514.7L1454.7,516.3L1456.4,516.5L1457.8,517.8L1458.3,518.9L1459.5,519.5L1461.2,522.5M1457.5,511.4L1457.1,511.6L1457.2,510.3L1456.8,509.3L1455.5,508.2L1455.1,506.3L1455.5,504.3L1454.2,504.1L1454,504.7L1452.3,504.8L1453,505.6L1453.2,507.3L1451.7,508.8L1450.4,510.7L1449,511L1446.7,509.4L1445.7,510L1445.4,510.8L1444,511.3L1443.9,511.8L1441.2,511.8L1440.8,511.3L1438.8,511.2L1437.8,511.7L1437.1,511.4L1435.7,509.8L1435.2,509.1L1433.2,509.5L1432.5,510.7L1431.8,513.2L1430.8,513.7L1430,514L1429.8,513.8L1428.8,513.1L1428.7,512.2L1429.1,511.1L1429.1,510L1427.5,508.3L1427.2,507.1M1430,514L1431.9,515L1433.3,516.1L1433.4,517L1435.2,518.5L1436.3,519.6L1437.1,521.3L1439.1,522.4L1439.5,523.2M1443.9,616.5L1444.9,617.4L1444,618.7L1443.6,619.6L1442,620L1441.5,620.9L1440.5,621.1L1438.5,619L1439.9,617.3L1441.4,616.2L1442.7,615.7L1443.9,616.5M1480.4,435.9L1479,437.6L1477.5,438.3L1477.7,440.3L1476.7,443.6L1470.7,446.4L1465.3,449.3L1462.3,448.2M1462.6,446.7L1463.3,445.2L1464.7,444.2L1464.3,443.1L1463,443M1470.7,446.4L1471.8,449.7L1471.3,450.1L1465.8,451.5L1468.5,454.2L1467.6,454.7L1467.2,455.6L1465.1,456L1464.4,457L1463.3,457.8L1460.2,457.4M1471.8,449.7L1475.1,450.5L1479.1,452.4L1486.8,457.9L1491.9,458.1L1494.3,458.4L1495,459.6L1497,459.6M1491.9,458.1L1493.9,455.5L1495.7,455.7M1487,436.1L1488.8,439.3L1490.6,440.1L1490.8,441.7L1489.4,442.7L1488.8,444.8L1490.7,447.4L1494,448.9L1495.4,451L1495,453L1495.8,452.9L1495.8,454.4L1497.4,455.8M1481.6,492.9L1482.8,492L1482.5,490.9L1483.2,489.5L1484.3,490.2L1485.1,490L1488.2,489.9L1488.7,490.2L1491.4,490.5L1492.4,490.3L1493.1,491.2L1494.4,490.8L1496.3,487.9L1498.9,486.7L1506.7,485.6L1508.9,490.2L1509.8,492.1M1506.7,485.6L1514.9,482.9L1516.7,477.5L1515.5,475.5L1514.9,476.1L1506.7,474.7L1505.7,472L1505.6,471.3M1515.5,475.5L1515.5,474.4L1516.4,473.3L1516.4,472.2L1517.6,471.6L1517.1,471.3L1517.3,469.5L1518.7,469.5M1503.5,470L1504.3,470.5L1505.1,470.3M1487.1,429.1L1487.5,430.1L1488.9,431.4L1490.7,431.8L1491.7,431.7L1495,429.7L1496,429.5L1496.8,430.3L1495.8,431.6L1497.5,433.1L1498.2,432.9M1512,436L1514.4,435.5L1516.3,433.9L1518.1,434L1519.3,433.5L1521.3,433.7L1524.3,435.1L1526.5,435.4L1529.6,437.8L1531.6,437.9L1531.9,440.2L1530.7,443.6L1530,445.6L1531.2,446L1530,447.5L1530.9,449.7L1531.1,451.4L1533.2,451.9L1533.4,453.6L1530.9,456.1L1532.3,457.5L1533.4,459.2L1536,460.4L1536.1,462.8L1537.4,463.2L1537.6,464.5L1533.7,465.9L1532.7,469.1M1483.7,425.4L1487.5,424.9L1488.2,424.5L1490.2,425.3L1491.7,425.4L1492.1,425.1L1490.8,423.6L1491.4,423.3M1487.5,424.9L1488.1,425.6L1489.2,426.1L1488.6,426.8L1490.1,427.7L1489.3,428.6L1490.4,429.3L1491.7,429.8L1491.7,431.7M1487.1,429.1L1487.6,429L1488.4,429.8L1489.6,429.8L1489.6,430.2L1490.7,431.8M1517.6,424.8L1520.6,424.7L1520.2,423.3L1522.5,422.4L1524.8,420.8L1528.5,422.3L1528.8,424.4L1529.8,425L1532.8,424.9L1533.7,425.4L1535,428.2L1538.2,430.1L1539.9,431.4L1542.8,432.7L1546.4,433.9L1546.4,435.5L1545.5,435.5L1544.3,434.7L1543.8,435.7L1541.5,436.2L1541,438.4L1539.4,439.2L1537.3,439.6L1536.7,440.9L1534.6,441.2L1531.9,440.2M1546.4,435.5L1547.9,435.5L1549.9,436.1L1550.8,436.5L1552.7,435.6L1553.7,436.1L1554.5,434.9L1556.2,434.9L1556.6,434.5L1556.9,433.4L1558.1,432.5L1559.5,433.1L1559.2,433.9L1560.1,434L1559.8,436.3L1560.9,437.2L1561.8,436.7L1563.1,436.4L1564.7,435.2L1566.6,435.4L1569.4,435.4M1549.9,436.1L1551.5,433.4L1550.9,431.3L1548.9,430.7L1549.6,429.5L1551.9,429.6L1553.1,428.1L1554,426.3L1557.7,425.7L1557.1,427L1557.5,427.7L1558.6,427.7L1557.6,428.5L1554.6,428.1L1554.4,429.6L1557.4,429.4L1560.7,430.3L1565.9,429.9M1558.5,422.1L1559.3,422.4L1557,424.2L1559,425.2L1561,424.5L1564.2,426L1560.7,427.9L1558.6,427.7M1569.4,435.4L1568.3,436.5L1567,437L1563.8,437.3L1560.9,437.9L1559.3,439.1L1559.9,440.2L1560.2,441.6L1558.9,442.7L1559,443.8L1558.3,444.7L1555.7,444.7L1556.7,446.5L1555,447.1L1553.8,448.8L1554,450.4L1552.9,451.2L1551.9,451L1549.8,451.3L1549.5,452.1L1547.5,452.1L1546,453.6L1545.9,455.9L1542.3,457.1L1540.4,456.8L1539.9,457.4L1538.2,457.1L1535.5,457.5L1530.9,456.1M1638,481.8L1638.6,480.8L1640.9,479M1652,498.6L1654.2,499.6L1655.5,497.7L1657.9,498.7M1664.1,532L1664.5,533.8L1666.4,535.4L1668.2,534.8L1669.9,535L1671.5,533.7L1672.8,533.4L1675.4,534.2L1677.6,533.6L1679,529.8L1680.1,528.8L1681,525.7L1684.2,525.7L1686.5,526.2M1676.5,525.1L1677.7,526.6L1678.3,525.6L1679.6,525.7L1679.8,524L1679.9,522.6M1749.6,544.6L1749.7,553.5L1749.7,562.4M1705.9,561.8L1706.2,563.1"/>
<g fill="#007a87" fill-opacity=".5" stroke="#007a87" stroke-width="1.3">
<circle cx="1099.9" cy="433.2" r="31.7"/>
<circle cx="1652.2" cy="441.3" r="16.6"/>
<circle cx="1105.5" cy="373.0" r="13.3"/>
<circle cx="1575.7" cy="482.4" r="12.2"/>
<circle cx="1638.5" cy="373.2" r="12.1"/>
<circle cx="1460.7" cy="430.5" r="12.0"/>
<circle cx="1390.2" cy="397.7" r="9.5"/>
<circle cx="1742.1" cy="438.7" r="9.4"/>
<circle cx="1638.3" cy="495.9" r="8.5"/>
<circle cx="1370.9" cy="411.3" r="7.9"/>
<circle cx="1354.1" cy="427.7" r="7.6"/>
<circle cx="1551.0" cy="405.9" r="6.8"/>
<circle cx="1215.0" cy="564.0" r="6.0"/>
<circle cx="1406.1" cy="367.6" r="5.8"/>
<circle cx="1436.3" cy="362.1" r="5.8"/>
<circle cx="1447.2" cy="463.2" r="5.8"/>
<circle cx="1157.4" cy="564.0" r="5.2"/>
<circle cx="1461.2" cy="451.0" r="4.8"/>
<circle cx="1392.6" cy="383.6" r="4.6"/>
<circle cx="1611.0" cy="471.5" r="4.6"/>
<circle cx="1713.5" cy="435.8" r="4.6"/>
<circle cx="1728.6" cy="610.5" r="4.5"/>
<circle cx="1375.7" cy="398.0" r="4.4"/>
<circle cx="1386.9" cy="509.6" r="3.5"/>
<circle cx="1146.4" cy="478.2" r="3.3"/>
<circle cx="1387.3" cy="408.5" r="3.3"/>
<circle cx="1380.8" cy="393.5" r="3.2"/>
<circle cx="1400.5" cy="420.0" r="3.2"/>
<circle cx="1659.9" cy="492.7" r="3.1"/>
<circle cx="1170.9" cy="619.1" r="1.8"/>
<circle cx="1190.1" cy="629.9" r="1.6"/>
<circle cx="1405.7" cy="410.9" r="1.6"/>
<circle cx="1418.3" cy="404.1" r="1.6"/>
<circle cx="1433.5" cy="411.3" r="1.6"/>
</g></svg><!--MAPEND-->
<div class="abs" style="left:1836px;top:276px;width:21px;height:476.7px;background:#f1f1f1">
  <div class="arr-up lt" style="left:5.500px;top:9px"></div>
  <div class="thumb" style="left:2px;top:21.1px;width:17px;height:430.9px"></div>
  <div class="arr-dn" style="left:5.500px;top:462.5px"></div>
</div>
<div class="t" style="left:855.5px;top:791.5px;font-size:14.7px;color:#323232">RESULTS</div>
<div class="t" style="left:961px;top:791.5px;font-size:14.7px;color:#323232">SAMPLES</div>
<div class="hline" style="left:855px;top:824px;width:1021px;background:#ececec"></div>
<svg class="abs" style="left:1854px;top:788px" width="14" height="9" viewBox="0 0 14 9" fill="none" stroke="#555" stroke-width="2"><path d="M1 1l6 6L13 1"/></svg>
<!--CHARTPANEL-END-->
</body>
</html>
